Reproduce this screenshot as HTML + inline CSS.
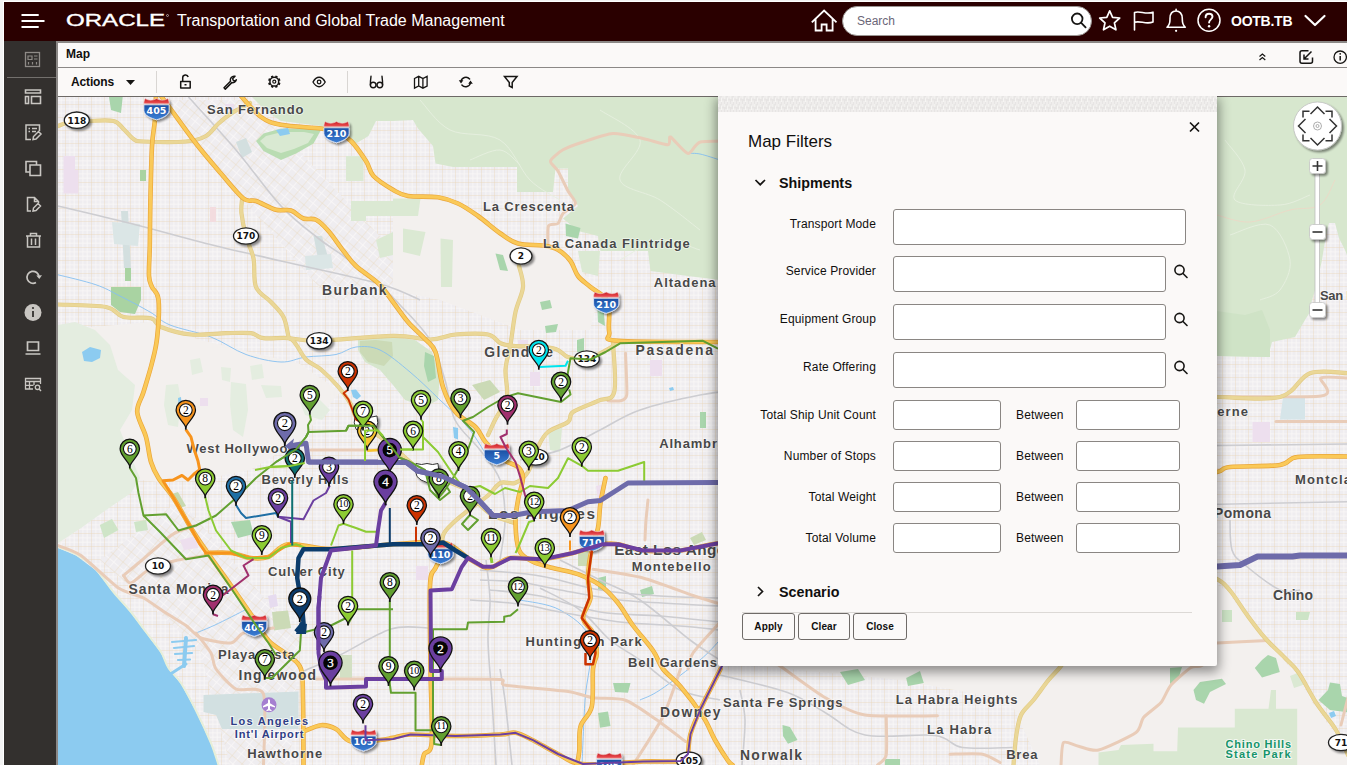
<!DOCTYPE html>
<html lang="en">
<head>
<meta charset="utf-8">
<title>Transportation and Global Trade Management</title>
<style>
*{box-sizing:border-box;margin:0;padding:0}
html,body{width:1348px;height:765px;overflow:hidden;background:#f3f3f3;font-family:"Liberation Sans",Arial,sans-serif;color:#100f0e}
#app{position:absolute;left:4px;top:2px;width:1343px;height:763px;overflow:hidden;background:#fbf9f8;outline:1px solid #fff}
#hdr{position:absolute;left:0;top:0;width:1343px;height:39px;background:#2a0000;color:#fff}
#hdr .title{position:absolute;left:173px;top:9px;font-size:16px;line-height:20px;white-space:nowrap;color:#fff}
#hdr .user{position:absolute;left:1227px;top:10px;font-size:14px;line-height:18px;font-weight:bold;letter-spacing:-0.25px}
#search{position:absolute;left:838px;top:4px;width:250px;height:30px;border-radius:15px;background:#fff;border:1px solid #9a9592}
#search span{position:absolute;left:14px;top:7px;font-size:12px;line-height:15px;color:#6b6677}
#side{position:absolute;left:0;top:39px;width:52px;height:724px;background:#33302e}
#side .sep{position:absolute;left:3px;top:36px;width:49px;height:1px;background:#73706d}
#side svg{position:absolute;left:0;top:0}
#main{position:absolute;left:52px;top:39px;width:1291px;height:724px;background:#fbf9f8;border-left:2px solid #8b8886}
#mhead{position:absolute;left:0;top:0;width:1289px;height:27px;border-top:2px solid #8b8886;border-bottom:1px solid #8b8886;background:#fbf9f8}
#mhead b{position:absolute;left:8px;top:4px;font-size:12px;line-height:15px}
#tbar{position:absolute;left:0;top:27px;width:1289px;height:29px;background:#fbf9f8;border-bottom:1px solid #6d6966}
#tbar .act{position:absolute;left:13px;top:7px;font-size:12px;line-height:15px;font-weight:bold;letter-spacing:-0.15px}
#tbar .vs{position:absolute;top:3px;width:1px;height:22px;background:#d9d6d3}
#map{position:absolute;left:0;top:56px;width:1289px;height:668px;background:#f1eeee;overflow:hidden}
#map svg{position:absolute;left:0;top:0}
#pwrap{position:absolute;left:54px;top:94px;width:1289px;height:669px;overflow:hidden}
#panel{position:absolute;left:660px;top:0;width:499px;height:570px;background:#fbf9f8;border-radius:0 0 2px 2px;box-shadow:0 4px 12px 2px rgba(0,0,0,.42)}
#panel .grip{position:absolute;left:0;top:0;width:499px;height:16px;background:#e7e5e4;overflow:hidden}
#panel h2{position:absolute;left:30px;top:36px;font-size:17px;line-height:20px;font-weight:normal}
#panel h3{position:absolute;font-size:14.3px;line-height:18px;font-weight:bold}
#panel label{position:absolute;font-size:12px;line-height:15px;text-align:right;white-space:nowrap;letter-spacing:.14px}
#panel .in{position:absolute;background:#fff;border:1px solid #8a8683;border-radius:3px}
#panel .hr{position:absolute;left:24px;top:516px;width:450px;height:1px;background:#dcd9d6}
#panel .btn{position:absolute;top:517px;height:27px;border:1px solid #6f6b68;border-radius:3px;font-size:10px;font-weight:bold;line-height:25px;letter-spacing:.1px;text-align:center;background:#fbf9f8}
</style>
</head>
<body>
<div id="app">
  <div id="hdr">
    <svg width="110" height="20" style="position:absolute;left:60px;top:9px"><text x="2" y="15.2" font-family="'Liberation Sans',Arial,sans-serif" font-size="16.6" fill="#fff" stroke="#fff" stroke-width=".35" textLength="99" lengthAdjust="spacingAndGlyphs">ORACLE</text><circle cx="103.500" cy="4.500" r="1" fill="none" stroke="#fff" stroke-width=".5"/></svg>
    <div class="title">Transportation and Global Trade Management</div>
    <div id="search"><span>Search</span></div>
    <div class="user">OOTB.TB</div>
    <svg id="hicons" width="1343" height="39" viewBox="4 2 1343 39" style="position:absolute;left:0;top:0" fill="none" stroke="#fff" stroke-width="2" stroke-linecap="round" stroke-linejoin="round">
      <path d="M21.5 15H38.7M21.5 21H44.5M21.5 27H38.7" stroke-width="2.2" stroke-linecap="butt"/>
<path d="M812.5 21.7L824.1 10.6L835.8 21.7M815.6 20V30.5H821.6V24.5H826.6V30.5H832.6V20" stroke-width="1.8" stroke-linecap="square" stroke-linejoin="miter"/>
<g stroke="#161513" stroke-width="1.8"><circle cx="1077.2" cy="18.8" r="5.3"/><path d="M1081.2 22.8L1085.6 27.4"/></g>
<path d="M1109.7 10.8L1112.6 17.3L1119.7 18L1114.4 22.8L1115.9 29.8L1109.7 26.2L1103.5 29.8L1105 22.8L1099.7 18L1106.8 17.3Z" stroke-width="1.7"/>
<path d="M1134.5 30V12.5C1140 10.5 1146 15 1153 12.2V22C1146 24.8 1140 20.3 1134.5 22.3" stroke-width="1.6"/>
<path d="M1167 27.3H1185.3C1182 24.5 1182.3 22 1182.3 18.5C1182.3 13.5 1179.5 11 1176.1 11C1172.7 11 1170 13.5 1170 18.5C1170 22 1170.3 24.5 1167 27.3ZM1176.1 11V9.3" stroke-width="1.6"/><circle cx="1176.1" cy="30.8" r="1.1" fill="#fff" stroke="none"/>
<circle cx="1209" cy="20.3" r="11" stroke-width="1.5"/>
<path d="M1205.6 17.3C1205.6 15 1207.2 13.8 1209.1 13.8C1211 13.8 1212.5 15 1212.5 16.8C1212.5 19.3 1209.1 19.5 1209.1 22.6" stroke-width="1.9"/><circle cx="1209.1" cy="26.3" r="1.2" fill="#fff" stroke="none"/>
<path d="M1305.5 16L1315 25L1324.5 16" stroke-width="2.2"/>
    </svg>
  </div>
  <div id="side">
    <div class="sep"></div>
    <svg id="sicons" width="52" height="724" viewBox="4 41 52 724" fill="none" stroke="#c9c6c2" stroke-width="1.6">
      <g stroke="#8f8b87" stroke-width="1.3"><rect x="25.5" y="52.5" width="14" height="14"/><path d="M28 56H32V59.5H28ZM34 56H37.5M34 59H37.5M28.5 62V64.5M32.5 62V64.5M36.5 62V64.5" stroke-width="1.2"/></g>
<path d="M25.5 90H40.5V93H25.5ZM25.5 96.5H28.5V103.5H25.5ZM31.5 96.5H40.5V103.5H31.5Z"/>
<path d="M39.5 131V125H26V139.5H31M28.5 128.5H30M32 128.5H37M28.5 131.5H30M32 131.5H36M33 139.5L33.5 136.5L38.5 131.5L41 134L36 139L33 139.5Z" stroke-width="1.5"/>
<path d="M36.5 164.5V161.5H26V172H29.5M30 165H40.5V175.5H30Z"/>
<path d="M31 211H27.5V197.5H34.5L38.5 201.5V203M34.5 197.5V201.5H38.5M33 211L33.5 208L38 203.5L40.5 206L36 210.5Z" stroke-width="1.5"/>
<path d="M26 236H41M30.5 236V233.5H36.5V236M27.5 236V247H39.5V236M31.5 238.5V245M35.5 238.5V245" stroke-width="1.5"/>
<path d="M39 277A6 6 0 1 0 36 282.5" stroke-width="1.7"/><path d="M36.3 275.5L39.3 279L42 275.2Z" fill="#c9c6c2" stroke="none"/>
<circle cx="33" cy="312.5" r="8.5" fill="#c9c6c2" stroke="none"/><path d="M33 311V317" stroke="#33302e" stroke-width="1.8"/><circle cx="33" cy="308" r="1.1" fill="#33302e" stroke="none"/>
<path d="M27.5 342H38.5V350.5H27.5ZM25.5 354H40.5" stroke-width="1.7"/>
<path d="M25.5 378.5H40.5V381.5H25.5ZM25.5 381.5V389H33M29.5 381.5V389M34 381.5V385M25.5 385.3H33.5M40.5 381.5V384" stroke-width="1.3"/><circle cx="37.5" cy="387.3" r="2.2" stroke-width="1.3"/><path d="M39.2 389L41 391" stroke-width="1.4"/>
    </svg>
  </div>
  <div id="main">
    <div id="mhead"><b>Map</b>
      <svg width="1289" height="24" viewBox="58 43 1289 24" style="position:absolute;left:0;top:0" fill="none" stroke="#161513" stroke-width="1.5">
        <path d="M1259.5 56.5L1262.4 54L1265.3 56.5M1259.5 60L1262.4 57.5L1265.3 60" stroke-width="1.2"/>
<path d="M1308.5 50.7H1302A2 2 0 0 0 1300 52.7V61.3A2 2 0 0 0 1302 63.3H1310.5A2 2 0 0 0 1312.5 61.3V57.5M1311.5 51.5L1304 59M1304 54.5V59H1308.5" stroke-width="1.5"/>
<circle cx="1340.2" cy="57.2" r="6.2" stroke-width="1.3"/><path d="M1340.2 56V60.5" stroke-width="1.5"/><circle cx="1340.2" cy="53.8" r=".9" fill="#161513" stroke="none"/>
      </svg>
    </div>
    <div id="tbar">
      <span class="act">Actions</span>
      <span class="vs" style="left:98px"></span>
      <span class="vs" style="left:289px"></span>
      <svg id="ticons" width="1289" height="28" viewBox="58 68 1289 28" style="position:absolute;left:0;top:0" fill="none" stroke="#161513" stroke-width="1.5" stroke-linecap="round" stroke-linejoin="round">
        <path d="M126 80H135L130.5 85Z" fill="#161513" stroke="none"/>
<path d="M180.7 81.5H190.2V88H180.7ZM182.7 81.5V77.8A2.8 2.8 0 0 1 188.2 77M184.5 84.8H186.5" stroke-width="1.5" stroke-linecap="butt"/>
<path d="M224 87.8L230.5 81.3A3.8 3.8 0 0 1 235 76.3L232.6 78.7L233.4 80.5L235.3 80.9L236.3 79.8A3.8 3.8 0 0 1 231.8 82.6L225.3 89.1Z" stroke-width="1.5"/>
<circle cx="274.3" cy="81.7" r="4.4" stroke-width="1.5"/><circle cx="274.3" cy="81.7" r="1.5" stroke-width="1.2"/><path d="M278.5 83.5L280.1 84.1M276.1 85.9L276.7 87.5M272.5 85.9L271.9 87.5M270.1 83.5L268.5 84.1M270.1 79.9L268.5 79.3M272.5 77.5L271.9 75.9M276.1 77.5L276.7 75.9M278.5 79.9L280.1 79.3" stroke-width="2.3" stroke-linecap="butt"/>
<path d="M313 82C315 78.5 317 77.3 319.1 77.3C321.2 77.3 323.2 78.5 325.2 82C323.2 85.5 321.2 86.7 319.1 86.7C317 86.7 315 85.5 313 82Z" stroke-width="1.4"/><circle cx="319.1" cy="82" r="1.8" stroke-width="1.3"/>
<path d="M371 76.3C370.6 79 370.4 82 370.4 85M382 76.3C382.4 79 382.6 82 382.6 85" stroke-width="1.4"/><circle cx="373.2" cy="85" r="2.8" stroke-width="1.4"/><circle cx="379.8" cy="85" r="2.8" stroke-width="1.4"/>
<path d="M414.5 78.5L418.7 76.3L422.9 78.5L427.1 76.3V86L422.9 88.2L418.7 86L414.5 88.2ZM418.7 76.3V86M422.9 78.5V88.2" stroke-width="1.3" stroke-linejoin="miter"/>
<path d="M461 81.5A4.9 4.9 0 0 1 469.6 79M470.5 82.5A4.9 4.9 0 0 1 461.9 85" stroke-width="1.5"/><path d="M458.8 80.2H463.4L461 83.4ZM468.2 83.8H472.8L470.5 80.6Z" fill="#161513" stroke="none"/>
<path d="M504.5 76.5H517L512.2 82.5V87.5L509.3 86V82.5Z" stroke-width="1.5" stroke-linejoin="miter"/>
      </svg>
    </div>
    <div id="map">
<svg id="mapsvg" width="1290" height="668" viewBox="58 97 1290 668">
<defs>
<pattern id="grid" width="13" height="13" patternUnits="userSpaceOnUse"><path d="M0 4.800H13M0 9.100H13M4.800 0V13M9.100 0V13" stroke="#f8f6f6" stroke-width=".9" fill="none"/><path d="M0 .5H13M.5 0V13" stroke="#e9d6b6" stroke-width=".7" fill="none" opacity=".55"/></pattern>
<pattern id="gridr" width="13" height="13" patternUnits="userSpaceOnUse" patternTransform="rotate(40)"><path d="M0 6.500H13M6.500 0V13" stroke="#f8f6f6" stroke-width=".9" fill="none"/><path d="M0 .5H13M.5 0V13" stroke="#e9d6b6" stroke-width=".7" fill="none" opacity=".5"/></pattern>
<linearGradient id="shblue" x1="0" y1="0" x2="0" y2="1"><stop offset="0" stop-color="#1b4fa3"/><stop offset="1" stop-color="#3a7fd6"/></linearGradient>
<linearGradient id="shred" x1="0" y1="0" x2="0" y2="1"><stop offset="0" stop-color="#c81e22"/><stop offset="1" stop-color="#f0555a"/></linearGradient>
<filter id="ds" x="-30%" y="-30%" width="160%" height="170%"><feGaussianBlur in="SourceAlpha" stdDeviation="1.2"/><feOffset dx="1.5" dy="2"/><feComponentTransfer><feFuncA type="linear" slope=".45"/></feComponentTransfer><feMerge><feMergeNode/><feMergeNode in="SourceGraphic"/></feMerge></filter>
<g id="pin"><path d="M0 17.2C-2.4 11-9.7 6.800-9.700 0A9.700 9.700 0 1 1 9.700 0C9.700 6.800 2.400 11 0 17.200Z" stroke="#111" stroke-width="1.250"/><path d="M0 16.500V19.600" stroke="#111" stroke-width="1.700"/></g>
<g id="pinL"><path d="M0 20.400C-2.800 13-11 8-11 0A11 11 0 1 1 11 0C11 8 2.800 13 0 20.400Z" stroke="#111" stroke-width="1.300"/><path d="M0 19.500V23" stroke="#111" stroke-width="1.800"/></g>
<g id="pinX"><path d="M0 21.200C-3 13.500-11.600 8.400-11.600 0A11.600 11.600 0 1 1 11.600 0C11.600 8.400 3 13.500 0 21.200Z" stroke="#111" stroke-width="1.300"/><path d="M0 20.300V23.500" stroke="#111" stroke-width="1.800"/></g>
</defs>
<rect x="58" y="96" width="1290" height="669" fill="#efedf0"/>
<rect x="58" y="96" width="1290" height="669" fill="url(#grid)"/>
<path d="M170 100L250 100L393 250L393 300L330 300L200 150Z" fill="#efedf0"/><path d="M170 100L250 100L393 250L393 300L330 300L200 150Z" fill="url(#gridr)"/>
<path d="M100 560L180 500L300 640L290 765L230 765L200 650Z" fill="#efedf0"/><path d="M100 560L180 500L300 640L290 765L230 765L200 650Z" fill="url(#gridr)"/>
<path d="M58 330L150 322L200 340L300 364L340 392L300 440L250 470L200 480L160 482L140 480L58 545Z" fill="#f3f0ee"/>
<path d="M393 190L460 205L520 245L560 250L600 290L590 330L520 330L440 300L393 290Z" fill="#f3f0ee"/>
<path d="M720 666L1216 666L1216 584L1228 592L1245 616L1263 638L1283 659L1296 675L1312 702L1332 730L1348 758L1348 765L1040 765L1010 700L900 680L760 666Z" fill="#f3f0ee"/>
<path d="M121 211L128 211L131 268L124 268Z" fill="#d3dfdf"/>
<path d="M112 222L140 224L138 246L114 244Z" fill="#dbe6e6"/>
<path d="M313.5 236L322 236L331 268L320 268.5Z" fill="#d3dfdf"/>
<path d="M305 256L331 254L333 268L306 270Z" fill="#dbe6e6"/>
<path d="M236 142L246 138L252 152L242 158Z" fill="#d3dfdf"/>
<path d="M203.5 695L298.5 691.5L298.5 729L222 729L216 715L203.5 712Z" fill="#d2e0e1"/>
<path d="M63.5 156L75 156L75 170L78.5 170L78.5 193.5L63.5 193.5Z" fill="#eddfee"/>
<path d="M1252.5 422L1270 422L1270 442L1252.5 442Z" fill="#eddfee"/>
<path d="M1283 397L1305 397L1305 419.5L1280 419.5Z" fill="#d6e5e9"/>
<path d="M225 104L234 104L234 114L225 114Z" fill="#eddfee"/>
<path d="M180 540L196 536L198 548L184 550Z" fill="#eddfee"/>
<path d="M268 596L276 594L278 606L270 608Z" fill="#e6dbef"/>
<path d="M518 340L528 340L528 352L518 352Z" fill="#eddfee"/>
<path d="M530 372L540 372L540 386L530 386Z" fill="#eddfee"/>
<path d="M650 360L662 360L662 376L650 376Z" fill="#eddfee"/>
<path d="M596 486L604 484L606 500L598 500Z" fill="#eddfee"/>
<path d="M416 566L428 566L428 580L416 580Z" fill="#eddfee"/>
<path d="M200 398L208 398L208 406L200 406Z" fill="#eddfee"/>
<path d="M210 207L216 207L216 222L210 222Z" fill="#f3dcdf"/>
<path d="M251 96L266 111L281 121L321 126L346 136L356 143.5L368.5 136L376 121L393 121L413 120L418 128.5L433 146L435.5 163.5L453 167L517 167L517 192L553 192L555.5 168.5L568 168.5L568 188.5L578 206L563 218.5L578 231L598 236L600.5 251L648 251L650.5 271L688 276L720 280L1217 356L1268 357L1272 342L1295 337L1305 320L1310 312L1312 300L1316 287L1322 260L1326 235L1329 223L1335 223L1339 238L1345 250L1348 258L1348 96Z" fill="#d7e7ce"/>
<path d="M1217 311L1245 315L1262 310L1270 330L1270 357L1217 356Z" fill="#cfe3c6"/>
<path d="M58 325L75 322L95 330L110 345L118 370L135 385L132 410L120 430L128 450L140 478L131 493L106 510L81 528L58 543Z" fill="#e4ede0"/>
<path d="M166 385L178 384L181 400L178 427L168 425L164 405Z" fill="#e4ede0"/>
<path d="M231 382L246 384L248 410L243 437L233 430L230 405Z" fill="#e4ede0"/>
<path d="M261 385L281 386L282 397L266 398Z" fill="#e4ede0"/>
<path d="M221 367L231 368L230 382L222 380Z" fill="#e4ede0"/>
<path d="M250 366L262 364L264 378L252 380Z" fill="#e4ede0"/>
<path d="M190 360L200 358L203 372L192 375Z" fill="#e4ede0"/>
<path d="M300 402L318 398L330 410L322 420L305 415Z" fill="#e4ede0"/>
<path d="M358 340L372 338L393 337L415 340L432 352L440 375L438 400L425 407L405 400L393 385L380 370L365 362L358 350Z" fill="#d6e6cd"/>
<path d="M360 341L376 340L392 342L393 356L384 366L368 362L360 352Z" fill="#cbdab6"/>
<path d="M425 352L434 356L436 378L428 382L424 366Z" fill="#a9d5ac"/>
<path d="M256 141L263.5 133.5L281 128.5L306 128.5L321 130L313.5 143.5L296 153.5L281 160L263.5 151Z" fill="#b9dcb2"/>
<path d="M260 141L266 136L282 132L304 132L314 134L308 143L294 149L281 153L267 148Z" fill="#d9e9d2"/>
<path d="M111 287L141 287L141 300L135 314L120 312L111 305Z" fill="#a9d3a2"/>
<path d="M109 97L122.7 97L121 113L111 110Z" fill="#a9d5ac"/>
<path d="M140 170L146 170L146 181L140 181Z" fill="#a9d3a2"/>
<path d="M125 268L131 268L131 281L125 281Z" fill="#a9d3a2"/>
<path d="M346 156L363.5 156L363.5 181L346 181Z" fill="#dbe9d3"/>
<path d="M351 201L366 201L366 221L351 221Z" fill="#dbe9d3"/>
<path d="M366 201L393 201L393 216L366 216Z" fill="#dbe9d3"/>
<path d="M376 240L393 232L393 255L380 258Z" fill="#dbe9d3"/>
<path d="M393 198.5L420.5 198.5L418 216L393 216Z" fill="#dbe9d3"/>
<path d="M403 228.5L425.5 232L420 256L403 252Z" fill="#dbe9d3"/>
<path d="M440.5 238.5L453 240L452 287L441 287Z" fill="#dbe9d3"/>
<path d="M495.5 253.5L503 255L508 271L500 270Z" fill="#a9d5ac"/>
<path d="M565.5 223.5L580.5 228L578 238.5L566 236Z" fill="#a9d5ac"/>
<path d="M578 251L600 251L598 276L582 272Z" fill="#dbe9d3"/>
<path d="M597 300L603 302L605 326L598 322Z" fill="#a9d5ac"/>
<path d="M540 302L550 300L552 308L542 310Z" fill="#a9d5ac"/>
<path d="M545 326L558 324L556 332L546 333Z" fill="#a9d5ac"/>
<path d="M577 340L584 338L584 352L577 352Z" fill="#a9d5ac"/>
<path d="M472 385L490 380L500 392L484 400Z" fill="#cbdab6"/>
<path d="M548 430L562 428L560 452L550 450Z" fill="#dbe9d3"/>
<path d="M700 412L706 412L706 428L700 428Z" fill="#a9d5ac"/>
<path d="M231 522L250 520L253.5 534L238 538Z" fill="#a9d5ac"/>
<path d="M99.8 525L112 519L118.5 530L104 538Z" fill="#cfe5c8"/>
<path d="M134 522L146 520L148 530L136 532Z" fill="#cfe5c8"/>
<path d="M272 612L288 610.5L291 628L274 630.5Z" fill="#cbdab6"/>
<path d="M172 494L178 492L186 506L180 508Z" fill="#c7d9b0"/>
<path d="M340 655L352 655L352 678L340 678Z" fill="#d3e0c4"/>
<path d="M613 683L630.5 683L628 692.8L615 692Z" fill="#a9d5ac"/>
<path d="M598 713L608 711.5L610.5 726L600 727.8Z" fill="#a9d5ac"/>
<path d="M840 672L858 669L865 680L848 685Z" fill="#a9d5ac"/>
<path d="M906.2 678L920 671L923.8 683L908 686Z" fill="#a9d5ac"/>
<path d="M782.5 725L790 727L797.5 740L788 743.8L783 736Z" fill="#a9d5ac"/>
<path d="M885 759L900 759L900 765L885 765Z" fill="#a9d5ac"/>
<path d="M598 578L606 576L606 590L598 590Z" fill="#a9d5ac"/>
<path d="M640 590L652 586L654 594L642 597Z" fill="#a9d5ac"/>
<path d="M578 550L588 550L588 566L578 566Z" fill="#cbdab6"/>
<path d="M690 538L702 532L706 540L694 545Z" fill="#cbdab6"/>
<path d="M1234.8 708.8L1268.5 708.8L1271 690L1276 690L1276 708.8L1297.2 708.8L1297.2 765L1098.5 765L1098.5 752.5L1118.5 750L1121 745L1153.5 743.8L1153.5 751.2L1177.2 751.2L1178 727.5L1234.8 727.5Z" fill="#d9e8d1"/>
<path d="M1193.5 690L1200 682L1222 678.8L1226 684L1210 692L1204 703.8L1196 700Z" fill="#a9d5ac"/>
<path d="M1254.8 668L1262 660L1268 655L1276 658L1279.8 672L1262 677.5Z" fill="#a9d5ac"/>
<path d="M1318.5 700L1328 690L1330 682.5L1340 684L1342 696L1348 698L1348 712.5L1330 710Z" fill="#a9d5ac"/>
<path d="M1170 668L1182 667L1178 680L1170 684Z" fill="#a9d5ac"/>
<path d="M1290 676L1300 672L1306 684L1294 688Z" fill="#dbe9d3"/>
<path d="M1222 610L1232 610L1232 622L1222 622Z" fill="#cde4c6"/>
<path d="M1296 612L1310 612L1308 620L1296 620Z" fill="#cde4c6"/>
<g fill="none" stroke="#e6efe0" stroke-width=".9">
<path d="M420 100C425 105 436.7 123.3 450 130C463.3 136.7 486.7 131.7 500 140C513.3 148.3 520 170 530 180C540 190 555 196.7 560 200"/>
<path d="M600 110C606.7 115 636.7 128.3 640 140C643.3 151.7 616.7 170 620 180C623.3 190 646.7 191.7 660 200C673.3 208.3 693.3 225 700 230"/>
<path d="M1225 140C1228.3 145 1243.3 160 1245 170C1246.7 180 1229.2 194.2 1235 200C1240.8 205.8 1267.5 205.8 1280 205C1292.5 204.2 1305 196.7 1310 195"/>
<path d="M1230 235C1236.7 233.3 1260 220.8 1270 225C1280 229.2 1288.3 249.2 1290 260C1291.7 270.8 1285 283.3 1280 290C1275 296.7 1263.3 298.3 1260 300"/>
<path d="M470 160C475 158.3 491.7 149.2 500 150C508.3 150.8 516.7 162.5 520 165"/>
<path d="M620 260C626.7 256.7 646.7 241.7 660 240C673.3 238.3 693.3 248.3 700 250"/>
</g>
<path d="M1217 215C1222.5 216.2 1237.8 222.8 1250 222C1262.2 221.2 1278.3 212.8 1290 210C1301.7 207.2 1312.5 210 1320 205C1327.5 200 1332.5 184.2 1335 180" fill="none" stroke="#ecd8c6" stroke-width=".9"/>
<path d="M58 548L76 555.5L96 570.5L113.5 593L131 613L146 633L161 653L168.5 669L181 684L196 711.5L211 744L218.5 765L58 765Z" fill="#8ccbf0"/>
<path d="M82 352L90 347L101 350L100 358L92 362L84 361Z" fill="#8ccbf0"/>
<path d="M351 390L356 389.5L361 396L357 399.5L353 397Z" fill="#8ccbf0"/>
<path d="M453 427L458 428L458 439.5L454 438Z" fill="#8ccbf0"/>
<path d="M178 398L181 397L182 410L179 412Z" fill="#8ccbf0"/>
<path d="M276 130L288 128L290 134L280 136Z" fill="#8ccbf0"/>
<path d="M669 388L673 387L674 390L670 391Z" fill="#8ccbf0"/>
<path d="M1329 713L1334 711L1336 716L1331 718Z" fill="#8ccbf0"/>
<path d="M58 547C61 548.2 69.7 550.8 76 554.5C82.3 558.2 89.8 563.2 96 569.5C102.2 575.8 107.7 584.9 113.5 592C119.3 599.1 125.6 605.3 131 612C136.4 618.7 141 625.3 146 632C151 638.7 157.2 646 161 652C164.8 658 165.2 662.8 168.5 668C171.8 673.2 176.4 675.9 181 683C185.6 690.1 191 700.5 196 710.5C201 720.5 207.2 733.9 211 743C214.8 752.1 217.2 761.3 218.5 765" fill="none" stroke="#e7efd9" stroke-width="2"/>
<g stroke="#8ccbf0" stroke-width="2.2" fill="none" stroke-linecap="round"><path d="M172 642L196 640M174 648L194 646M175 654L192 653M178 660L190 659.5"/><path d="M186 638L184 666" stroke-width="4"/><path d="M186 664L158 682" stroke-width="3"/></g>
<g fill="none" stroke="#86bff0" stroke-width=".9">
<path d="M58 274.8C64.3 276.4 85.7 281.2 96 284.8C106.3 288.3 111 291.5 120 296C129 300.5 141.7 307.2 150 312C158.3 316.8 159.8 320.8 170 325C180.2 329.2 198.3 332.1 211 337C223.7 341.9 234.3 350.3 246 354.5C257.7 358.7 271 361.6 281 362C291 362.4 296.8 358.2 306 357C315.2 355.8 327.7 356.2 336 354.5C344.3 352.8 348.7 347.8 356 347C363.3 346.2 371 345.8 380 350C389 354.2 400 363.7 410 372C420 380.3 430 390.3 440 400C450 409.7 460.8 418.3 470 430C479.2 441.7 490.8 463.3 495 470"/>
<path d="M520 600C526.7 601.7 548.3 603.3 560 610C571.7 616.7 585.8 625 590 640C594.2 655 586.3 679.2 585 700C583.7 720.8 582.5 754.2 582 765"/>
<path d="M688 153.5C690 153.6 694.7 152.9 700 154C705.3 155.1 716.7 159 720 160"/>
<path d="M196 633C199.2 631.7 206.8 628.8 215 625C223.2 621.2 240 612.5 245 610"/>
<path d="M640 700C643.3 698.3 650 696.7 660 690C670 683.3 690 668.3 700 660C710 651.7 716.7 643.3 720 640"/>
</g>
<g fill="none" stroke="#cdcdd1" stroke-width="1.6">
<path d="M304 671C310 668.3 325.5 662 340 655C354.5 648 376.3 633.5 391 629C405.7 624.5 421.8 628.2 428 628"/>
<path d="M470 600C478.3 600.7 505 602 520 604C535 606 543.3 609 560 612C576.7 615 600 619.7 620 622C640 624.3 663.3 624.7 680 626C696.7 627.3 713.3 629.3 720 630"/>
<path d="M480 570C490 571 520 572.7 540 576C560 579.3 580 586.7 600 590C620 593.3 640 594.7 660 596C680 597.3 710 597.7 720 598"/>
<path d="M560 560C566.7 563.3 586.7 573.3 600 580C613.3 586.7 625 590 640 600C655 610 676.7 630 690 640C703.3 650 715 656.7 720 660"/>
<path d="M58 206C70.2 208.9 106.3 217.2 131 223.5C155.7 229.8 181 237.2 206 243.5C231 249.8 252.2 254.3 281 261C309.8 267.7 355.3 277 378.5 283.5C401.7 290 413.1 297.2 420 300"/>
<path d="M188.5 97C196.4 105.8 220.6 131.8 236 150C251.4 168.2 267.2 191.2 281 206C294.8 220.8 308.1 230.2 318.5 238.5C328.9 246.8 333.5 248.5 343.5 256C353.5 263.5 369.1 275.3 378.5 283.5C387.9 291.7 391.4 295.6 400 305C408.6 314.4 422.5 327.5 430 340C437.5 352.5 440.8 366.7 445 380C449.2 393.3 449.2 408.3 455 420C460.8 431.7 472.5 440 480 450C487.5 460 495.8 468.3 500 480C504.2 491.7 505 506.7 505 520C505 533.3 500.8 553.3 500 560"/>
<path d="M1180 446L1348 444"/>
<path d="M1180 505L1348 501.8"/>
<path d="M720 675C731.2 677.9 770 686.2 787.5 692.5C805 698.8 812.1 705.4 825 712.5C837.9 719.6 846.7 731.2 865 735C883.3 738.8 918.8 733.4 935 735.5C951.2 737.6 949.6 745.5 962.5 747.5C975.4 749.5 1004.2 747.5 1012.5 747.5"/>
<path d="M480 580C486.7 580.3 506.7 580.3 520 582C533.3 583.7 543.3 587 560 590C576.7 593 600 597.7 620 600C640 602.3 663.3 603 680 604C696.7 605 713.3 605.7 720 606"/>
<path d="M490 590C498.3 591 521.7 592.3 540 596C558.3 599.7 580 608.7 600 612C620 615.3 640 614.3 660 616C680 617.7 710 621 720 622"/>
<path d="M540 588C546.7 591.7 568.3 601.3 580 610C591.7 618.7 600 631.7 610 640C620 648.3 628.3 651.7 640 660C651.7 668.3 666.7 683.3 680 690C693.3 696.7 713.3 698.3 720 700"/>
<path d="M500 669C500.8 674.2 503 684 505 700C507 716 510.8 754.2 512 765"/>
<path d="M486 560C486.7 566.7 489.7 586.7 490 600C490.3 613.3 487.7 623.3 488 640C488.3 656.7 490.7 679.2 492 700C493.3 720.8 495.3 754.2 496 765"/>
<path d="M1230 520C1230.3 525 1229.5 542.5 1232 550C1234.5 557.5 1237 558.3 1245 565C1253 571.7 1270.8 585.8 1280 590C1289.2 594.2 1296.7 590 1300 590"/>
<path d="M520 460C526.7 458.3 546.7 455 560 450C573.3 445 586.7 436.7 600 430C613.3 423.3 623.3 415.8 640 410C656.7 404.2 683.3 398.3 700 395C716.7 391.7 733.3 390.8 740 390"/>
<path d="M740 690C740.8 695 744.7 707.5 745 720C745.3 732.5 742.5 757.5 742 765"/>
</g>
<g fill="none" stroke="#e9ccb8" stroke-width="3" stroke-linejoin="round" stroke-linecap="round">
<path d="M548 246C548.1 243.7 547.3 228.6 548.5 226C549.7 223.4 556.3 225 558 223.5C559.7 222 561 215.8 563 213.5C565 211.2 574.9 206.1 575.5 203.5C576.1 200.9 570 194.8 568 191C566 187.2 560 174.5 558 171C556 167.5 549.9 163.5 550.5 161C551.1 158.5 559.2 152 563 149.8C566.8 147.5 577.2 143.9 583 142C588.8 140.1 606 133.9 613 133.5C620 133.1 636.6 137.2 643 138.5C649.4 139.8 664.8 144.9 668 144.8C671.2 144.6 668.2 136 670.5 137C672.8 138 684.5 152.9 688 153.5C691.5 154.1 694.4 143.5 700.5 142C706.6 140.5 735.4 141.1 740 141"/>
<path d="M58 545.5C60.7 546.7 73.9 550.5 81 555.5C88.1 560.5 111.2 583 118.5 588C125.8 593 138 595.1 143.5 598C149 600.9 161 609.8 166 613C171 616.2 181.9 622.6 186 625.5C190.1 628.4 195.8 636 201 638C206.2 640 226 643.6 231 643C236 642.4 238.5 634.8 243.5 633C248.5 631.2 270 628.6 273.5 628"/>
<path d="M123.5 575.5C125.2 574 133 567.7 138.5 563C144 558.3 166 539.3 171 535.5C176 531.7 178.1 531.7 181 530.5C183.9 529.3 194.2 526.1 196 525.5"/>
<path d="M123.5 575.5C124.4 576.4 127.8 583.9 131 583C134.2 582.1 145.8 570.6 151 568C156.2 565.4 169.6 562 176 560.5C182.4 559 202.5 556.1 206 555.5"/>
<path d="M196 633C197.8 635.3 208.7 648.8 211 653C213.3 657.2 213.1 664.8 216 669C218.9 673.2 230.5 686.1 236 689C241.5 691.9 260.3 685.1 263.5 694C266.7 702.9 263.5 756.7 263.5 765"/>
<path d="M316 679C325 679 378.2 679 393 679C407.8 679 430.5 678.9 443 679C455.5 679.1 493.2 678.8 500.5 679.5C507.8 680.2 497.6 683.9 505.5 685.2C513.4 686.6 557.8 690 568 691.5C578.2 693 586.3 696.7 593 697.8C599.7 698.8 618.2 697.8 625.5 700.2C632.8 702.7 648.5 714.2 655.5 719C662.5 723.8 682 738.9 685.5 741.5"/>
<path d="M680.5 669C678.5 674.5 668.5 705.3 663 716.5C657.5 727.7 636.5 759.3 633 765"/>
<path d="M593 569.2C598.8 570.3 631.3 574.9 643 578C654.7 581.1 684.4 592.6 693 595.5C701.6 598.4 709.2 600.7 717 603C724.8 605.3 755 613.6 760 615"/>
<path d="M740 600C737.3 603 722.5 619.3 717 625.5C711.5 631.7 696.4 647.9 693 653C689.6 658.1 688.6 667.1 688 669"/>
<path d="M625.5 353.2C625.6 358.1 627.3 389 626.8 394.5C626.2 400 622.7 400 620.5 400.8C618.3 401.5 609.5 400.8 608 400.8"/>
<path d="M311 450L378.5 450"/>
<path d="M740 640C744.7 643 770.1 659.3 780 666C789.9 672.7 815.1 691.8 825 697.5C834.9 703.2 851.9 712.9 865 715C878.1 717.1 929 715.7 937.5 715.8"/>
<path d="M886.2 715.8C886.2 720.3 887.3 749.3 886.2 755C885.2 760.7 878.5 763.8 877.5 765"/>
<path d="M950 754.2C953.8 754.2 976.7 753.3 982.5 754.2C988.3 755.2 998 761.5 1000 762.5"/>
<path d="M1215 655C1213.4 656.3 1203.8 664.5 1201 666C1198.2 667.5 1194.5 665.3 1191 667.5C1187.5 669.7 1174.5 680.9 1171 685C1167.5 689.1 1164.2 698.7 1161 702.5C1157.8 706.3 1146.4 714 1143.5 717.5C1140.6 721 1141.2 728.7 1136 732.5C1130.8 736.3 1105.2 748.4 1098.5 750C1091.8 751.6 1082.6 747.1 1078.5 746.2C1074.4 745.4 1065.5 740.3 1063.5 742.5C1061.5 744.7 1061.3 762.4 1061 765"/>
<path d="M1180 396C1196.5 396 1304.5 398.1 1321 396C1337.5 393.9 1317.8 380.1 1321 378C1324.2 375.9 1344.8 378 1348 378"/>
<path d="M1276 421.5L1348 421.5"/>
<path d="M1180 645C1184.3 644.8 1206.8 643.5 1217 643C1227.2 642.5 1261.6 640.8 1267.5 640.5"/>
<path d="M1348 697.5L1341 725"/>
<path d="M645 540C645.1 537.7 645.6 524.7 646 520C646.4 515.3 647.8 502.3 648 500"/>
</g>
<g fill="none" stroke-linejoin="round" stroke-linecap="round">
<path d="M58 126C60 125.3 64.9 122.8 70 122C75.1 121.2 81.2 121.2 88.5 121C95.8 120.8 107.7 119.7 113.5 121C119.3 122.3 120.2 126 123.5 129C126.8 132 130.2 136.9 133.5 139C136.8 141.1 134.8 141.1 143.5 141.5C152.2 141.9 175.6 142.4 186 141.5C196.4 140.6 200.6 139 206 136C211.4 133 214.3 127.2 218.5 123.5C222.7 119.8 227.2 116.1 231 113.5C234.8 110.9 237.8 109.8 241 108C244.2 106.2 248.5 103.8 250 103" stroke="#e2ca84" stroke-width="4.2"/>
<path d="M242 199.8C241.9 202 240.8 207.5 241.5 213.5C242.2 219.5 244 228.5 246 236C248 243.5 251.8 250 253.5 258.5C255.2 267 253.1 279.8 256 287C258.9 294.2 266.4 297 271 302C275.6 307 280.6 311.2 283.5 317C286.4 322.8 287.7 333.7 288.5 337" stroke="#e2ca84" stroke-width="4.2"/>
<path d="M58 304.5C66 304.9 95.1 304.9 106 307C116.9 309.1 116 315.1 123.5 317C131 318.9 144.8 316.6 151 318.2C157.2 319.9 154.3 324.3 161 327C167.7 329.7 180.2 333.5 191 334.5C201.8 335.5 216 333.5 226 333.2C236 333 244.8 332.4 251 333.2C257.2 334.1 257.2 337.4 263.5 338.2C269.8 339.1 283.1 337.2 288.5 338.2C293.9 339.3 293.1 341 296 344.5C298.9 348 301.8 355.3 306 359.5C310.2 363.7 315.6 364.9 321 369.5C326.4 374.1 333.5 381.2 338.5 387C343.5 392.8 348.1 399.5 351 404.5C353.9 409.5 352.7 412.8 356 417C359.3 421.2 364.8 425 371 430C377.2 435 384.8 440.3 393 447C401.2 453.7 412.5 464.8 420 470C427.5 475.2 430 474.6 438 478C446 481.4 461.3 486.3 468 490.5C474.7 494.7 473.8 498.8 478 503C482.2 507.2 486.8 512.2 493 515.5C499.2 518.8 511.3 521.8 515 523" stroke="#e2ca84" stroke-width="4.2"/>
<path d="M288.5 338C293.6 338.5 301.6 341.1 319 340.8C336.4 340.4 374.4 336 393 335.8C411.6 335.5 420.1 339.7 430.5 339.5C440.9 339.3 445.9 335.3 455.5 334.5C465.1 333.7 480.5 333 488 334.5C495.5 336 496.3 341.4 500.5 343.2C504.7 345.1 504.2 344.9 513 345.8C521.8 346.6 543.8 346.4 553 348.2C562.2 350.1 562.4 355.2 568 357C573.6 358.8 580.9 359.8 586.8 359C592.6 358.2 597.8 354.6 603 352C608.2 349.4 615.5 344.7 618 343.2" stroke="#e2ca84" stroke-width="4.2"/>
<path d="M519 266C519.7 269.5 523.6 279.3 523 287C522.4 294.7 517.6 302.4 515.5 312C513.4 321.6 512.2 334.9 510.5 344.5C508.8 354.1 506.1 360.8 505.5 369.5C504.9 378.2 508.5 388.6 506.8 397C505 405.4 498.1 413.7 495 420C491.9 426.3 489.2 432.5 488 435" stroke="#e2ca84" stroke-width="4.2"/>
<path d="M613 342C613.2 350.3 616.8 382.2 614.2 392C611.8 401.8 604.9 397.4 598 400.8C591.1 404.1 578 408.5 573 412C568 415.5 572.2 418.7 568 422C563.8 425.3 553 427.8 548 432C543 436.2 541.3 440.3 538 447C534.7 453.7 531.8 466 528 472C524.2 478 519.6 481.2 515 483C510.4 484.8 505 480.9 500.5 483C496 485.1 493.4 490.9 488 495.5C482.6 500.1 473.8 505.9 468 510.5C462.2 515.1 457.2 518.8 453 523C448.8 527.2 444.7 530.1 443 535.5C441.3 540.9 443 552.2 443 555.5" stroke="#e2ca84" stroke-width="4.2"/>
<path d="M1180 560C1186.2 563.2 1208.7 573.9 1217 579C1225.3 584.1 1224.9 584.4 1230 590.5C1235.1 596.6 1241.7 607.6 1247.5 615.5C1253.3 623.4 1258.8 630.9 1265 638C1271.2 645.1 1279.4 652.2 1285 658C1290.6 663.8 1293.3 665.1 1298.5 672.5C1303.7 679.9 1309.8 692.9 1316 702.5C1322.2 712.1 1330.7 721.2 1336 730C1341.3 738.8 1346 750.8 1348 755" stroke="#e2ca84" stroke-width="4.2"/>
<path d="M1070 650C1068.5 652.7 1064.6 661 1061 666C1057.4 671 1053.1 674.3 1048.5 680C1043.9 685.7 1038.1 694.2 1033.5 700C1028.9 705.8 1023.9 708.8 1021 715C1018.1 721.2 1017.2 729.2 1016 737.5C1014.8 745.8 1013.9 760.4 1013.5 765" stroke="#e2ca84" stroke-width="4.2"/>
<path d="M1180 397C1186.2 397 1200.3 397 1217 397C1233.7 397 1264.5 401 1280 397C1295.5 393 1298.7 377.2 1310 373.2C1321.3 369.3 1341.7 373.2 1348 373.2" stroke="#e2ca84" stroke-width="4.2"/>
<path d="M58 126C60 125.3 64.9 122.8 70 122C75.1 121.2 81.2 121.2 88.5 121C95.8 120.8 107.7 119.7 113.5 121C119.3 122.3 120.2 126 123.5 129C126.8 132 130.2 136.9 133.5 139C136.8 141.1 134.8 141.1 143.5 141.5C152.2 141.9 175.6 142.4 186 141.5C196.4 140.6 200.6 139 206 136C211.4 133 214.3 127.2 218.5 123.5C222.7 119.8 227.2 116.1 231 113.5C234.8 110.9 237.8 109.8 241 108C244.2 106.2 248.5 103.8 250 103" stroke="#ead797" stroke-width="3"/>
<path d="M242 199.8C241.9 202 240.8 207.5 241.5 213.5C242.2 219.5 244 228.5 246 236C248 243.5 251.8 250 253.5 258.5C255.2 267 253.1 279.8 256 287C258.9 294.2 266.4 297 271 302C275.6 307 280.6 311.2 283.5 317C286.4 322.8 287.7 333.7 288.5 337" stroke="#ead797" stroke-width="3"/>
<path d="M58 304.5C66 304.9 95.1 304.9 106 307C116.9 309.1 116 315.1 123.5 317C131 318.9 144.8 316.6 151 318.2C157.2 319.9 154.3 324.3 161 327C167.7 329.7 180.2 333.5 191 334.5C201.8 335.5 216 333.5 226 333.2C236 333 244.8 332.4 251 333.2C257.2 334.1 257.2 337.4 263.5 338.2C269.8 339.1 283.1 337.2 288.5 338.2C293.9 339.3 293.1 341 296 344.5C298.9 348 301.8 355.3 306 359.5C310.2 363.7 315.6 364.9 321 369.5C326.4 374.1 333.5 381.2 338.5 387C343.5 392.8 348.1 399.5 351 404.5C353.9 409.5 352.7 412.8 356 417C359.3 421.2 364.8 425 371 430C377.2 435 384.8 440.3 393 447C401.2 453.7 412.5 464.8 420 470C427.5 475.2 430 474.6 438 478C446 481.4 461.3 486.3 468 490.5C474.7 494.7 473.8 498.8 478 503C482.2 507.2 486.8 512.2 493 515.5C499.2 518.8 511.3 521.8 515 523" stroke="#ead797" stroke-width="3"/>
<path d="M288.5 338C293.6 338.5 301.6 341.1 319 340.8C336.4 340.4 374.4 336 393 335.8C411.6 335.5 420.1 339.7 430.5 339.5C440.9 339.3 445.9 335.3 455.5 334.5C465.1 333.7 480.5 333 488 334.5C495.5 336 496.3 341.4 500.5 343.2C504.7 345.1 504.2 344.9 513 345.8C521.8 346.6 543.8 346.4 553 348.2C562.2 350.1 562.4 355.2 568 357C573.6 358.8 580.9 359.8 586.8 359C592.6 358.2 597.8 354.6 603 352C608.2 349.4 615.5 344.7 618 343.2" stroke="#ead797" stroke-width="3"/>
<path d="M519 266C519.7 269.5 523.6 279.3 523 287C522.4 294.7 517.6 302.4 515.5 312C513.4 321.6 512.2 334.9 510.5 344.5C508.8 354.1 506.1 360.8 505.5 369.5C504.9 378.2 508.5 388.6 506.8 397C505 405.4 498.1 413.7 495 420C491.9 426.3 489.2 432.5 488 435" stroke="#ead797" stroke-width="3"/>
<path d="M613 342C613.2 350.3 616.8 382.2 614.2 392C611.8 401.8 604.9 397.4 598 400.8C591.1 404.1 578 408.5 573 412C568 415.5 572.2 418.7 568 422C563.8 425.3 553 427.8 548 432C543 436.2 541.3 440.3 538 447C534.7 453.7 531.8 466 528 472C524.2 478 519.6 481.2 515 483C510.4 484.8 505 480.9 500.5 483C496 485.1 493.4 490.9 488 495.5C482.6 500.1 473.8 505.9 468 510.5C462.2 515.1 457.2 518.8 453 523C448.8 527.2 444.7 530.1 443 535.5C441.3 540.9 443 552.2 443 555.5" stroke="#ead797" stroke-width="3"/>
<path d="M1180 560C1186.2 563.2 1208.7 573.9 1217 579C1225.3 584.1 1224.9 584.4 1230 590.5C1235.1 596.6 1241.7 607.6 1247.5 615.5C1253.3 623.4 1258.8 630.9 1265 638C1271.2 645.1 1279.4 652.2 1285 658C1290.6 663.8 1293.3 665.1 1298.5 672.5C1303.7 679.9 1309.8 692.9 1316 702.5C1322.2 712.1 1330.7 721.2 1336 730C1341.3 738.8 1346 750.8 1348 755" stroke="#ead797" stroke-width="3"/>
<path d="M1070 650C1068.5 652.7 1064.6 661 1061 666C1057.4 671 1053.1 674.3 1048.5 680C1043.9 685.7 1038.1 694.2 1033.5 700C1028.9 705.8 1023.9 708.8 1021 715C1018.1 721.2 1017.2 729.2 1016 737.5C1014.8 745.8 1013.9 760.4 1013.5 765" stroke="#ead797" stroke-width="3"/>
<path d="M1180 397C1186.2 397 1200.3 397 1217 397C1233.7 397 1264.5 401 1280 397C1295.5 393 1298.7 377.2 1310 373.2C1321.3 369.3 1341.7 373.2 1348 373.2" stroke="#ead797" stroke-width="3"/>
<path d="M156 96C155.8 100.2 155.4 112.7 154.8 121C154.1 129.3 152.7 133.5 152 146C151.3 158.5 150.9 179.3 150.5 196C150.1 212.7 150 232.7 149.8 246C149.5 259.3 148.6 269.2 149 276C149.4 282.8 150.4 283.1 152 287C153.6 290.9 157.6 291.2 158.5 299.5C159.4 307.8 158.3 326.6 157.2 337C156.2 347.4 154.5 352.8 152.2 362C150 371.2 146 383.7 143.5 392C141 400.3 136.8 404.5 137.2 412C137.7 419.5 143.7 428.7 146 437C148.3 445.3 148.9 455.2 151 462C153.1 468.8 154.8 472 158.5 478C162.2 484 168.1 489.7 173.5 498C178.9 506.3 185.6 519.2 191 528C196.4 536.8 199.3 540.9 206 550.5C212.7 560.1 223.1 574.2 231 585.5C238.9 596.8 247.2 608.8 253.5 618C259.8 627.2 262.7 634.2 268.5 640.5C274.3 646.8 283.1 650.8 288.5 655.5C293.9 660.2 298.6 661.6 301 669C303.4 676.4 302.6 684 303 700C303.4 716 303.4 754.2 303.5 765" stroke="#eaa63a" stroke-width="4.6"/>
<path d="M161 96C162.2 97.7 162.7 98.1 168.5 106C174.3 113.9 187.2 132.2 196 143.5C204.8 154.8 213.1 164.3 221 173.5C228.9 182.7 237.7 193.9 243.5 198.5C249.3 203.1 250.6 199.1 256 201C261.4 202.9 270.2 208.2 276 209.8C281.8 211.3 286.4 209 291 210.5C295.6 212 299.3 217 303.5 218.5C307.7 220 311.8 217.7 316 219.8C320.2 221.8 323.9 225.8 328.5 231C333.1 236.2 338.9 245.2 343.5 251C348.1 256.8 350.2 260.6 356 266C361.8 271.4 372.3 277.5 378.5 283.5C384.7 289.5 388.1 295.6 393 302C397.9 308.4 402.6 315.8 408 322C413.4 328.2 420.9 334.5 425.5 339.5C430.1 344.5 432.6 344.1 435.5 352C438.4 359.9 439.7 377 443 387C446.3 397 450.1 405.3 455.5 412C460.9 418.7 470.5 422 475.5 427C480.5 432 480.9 436.6 485.5 442C490.1 447.4 497.6 455.3 503 459.5C508.4 463.7 514.7 463.9 518 467C521.3 470.1 523 472.5 523 478C523 483.5 519.2 492.5 518 500C516.8 507.5 515.3 514.6 515.5 523C515.7 531.4 516.3 544 519.2 550.5C522.2 557 527.4 558.8 533 561.8C538.6 564.7 545.5 565.9 553 568C560.5 570.1 570.1 571.3 578 574.2C585.9 577.2 593.8 580.7 600.5 585.5C607.2 590.3 612.6 596.3 618 603C623.4 609.7 627.2 617.6 633 625.5C638.8 633.4 648 643.2 653 650.5C658 657.8 658.4 663 663 669C667.6 675 673.8 678.6 680.5 686.5C687.2 694.4 697.2 707.6 703 716.5C708.8 725.4 710.9 732.8 715 740C719.1 747.2 724.6 755.8 727.5 760C730.4 764.2 731.7 764.2 732.5 765" stroke="#eaa63a" stroke-width="4.6"/>
<path d="M241 96C244.3 99.5 254.3 112.2 261 117C267.7 121.8 271 122.8 281 124.8C291 126.7 311.8 127.3 321 128.5C330.2 129.7 331 129.9 336 132C341 134.1 346 136.2 351 141C356 145.8 362.2 155.2 366 161C369.8 166.8 369 171.2 373.5 176C378 180.8 387.2 186.4 393 189.8C398.8 193.1 400.5 194.8 408 196C415.5 197.2 429.7 196 438 197.2C446.3 198.5 451.3 200.4 458 203.5C464.7 206.6 470.9 211 478 216C485.1 221 493.8 228.9 500.5 233.5C507.2 238.1 510.9 241.5 518 243.5C525.1 245.5 536.3 244.5 543 245.5C549.7 246.5 553.4 247.2 558 249.8C562.6 252.3 567.2 256.6 570.5 261C573.8 265.4 574.7 271.7 578 276C581.3 280.3 585.5 282.7 590.5 287C595.5 291.3 604.9 294.5 608 302C611.1 309.5 607.6 325.5 609.2 332C610.9 338.5 600 339.1 618 340.8C636 342.4 693.3 341.8 717 342C740.7 342.2 752.8 342 760 342" stroke="#eaa63a" stroke-width="4.6"/>
<path d="M605.5 478C604.7 482.2 601.8 494.7 600.5 503C599.2 511.3 599.5 520.5 598 528C596.5 535.5 593.4 539.7 591.8 548C590.1 556.3 588.2 569.7 588 578C587.8 586.3 591.3 591.3 590.5 598C589.7 604.7 582.6 612.2 583 618C583.4 623.8 590.7 627.2 593 633C595.3 638.8 596.8 647 596.8 653C596.8 659 593.8 660.1 593 669C592.2 677.9 593.8 696.9 591.8 706.5C589.7 716.1 582.6 719 580.5 726.5C578.4 734 579.9 745.1 579.2 751.5C578.6 757.9 577.2 762.8 576.8 765" stroke="#eaa63a" stroke-width="4.6"/>
<path d="M443 555.5C441.8 557.6 437.7 563 435.5 568C433.3 573 430.8 568.7 430 585.5C429.2 602.3 430.2 643 430.5 669C430.8 695 432.8 727.3 431.8 741.5C430.7 755.7 425.9 750.1 424.2 754C422.6 757.9 422.2 763.2 421.8 765" stroke="#eaa63a" stroke-width="4.6"/>
<path d="M303.5 731.5C306.4 730.5 315.6 725.7 321 725.2C326.4 724.8 331 726.3 336 729C341 731.7 343.7 739.7 351 741.5C358.3 743.3 373 740.6 380 740C387 739.4 387.9 738.7 393 737.8C398.1 736.8 400.1 734.8 410.5 734.5C420.9 734.2 440.5 736 455.5 736C470.5 736 490.5 735 500.5 734.5C510.5 734 510.1 731.8 515.5 732.8C520.9 733.7 525.9 736.7 533 740.2C540.1 743.8 549.7 750 558 754C566.3 758 568.8 762.8 583 764C597.2 765.2 626.8 762 643 761.5C659.2 761 673 762.2 680.5 761C688 759.8 686.8 755.2 688 754" stroke="#eaa63a" stroke-width="4.6"/>
<path d="M720.5 669C719.7 670.7 718.8 672.3 715.5 679C712.2 685.7 704.7 699.8 700.5 709C696.3 718.2 692.6 726.5 690.5 734C688.4 741.5 688.8 748.8 688 754C687.2 759.2 686.3 763.2 686 765" stroke="#eaa63a" stroke-width="4.6"/>
<path d="M206 553C210.2 553 223.5 552.2 231 553C238.5 553.8 244.8 557.4 251 558C257.2 558.6 262.2 559 268.5 556.8C274.8 554.5 278.1 545.5 288.5 544.2C298.9 543 313.6 549 331 549C348.4 549 374.3 545.3 393 544.2C411.7 543.2 430.5 540.2 443 542.5C455.5 544.8 461.3 554 468 558C474.7 562 478.8 565.3 483 566.8C487.2 568.2 488.4 568.2 493 566.8C497.6 565.3 502.2 559.2 510.5 558C518.8 556.8 532.6 560.1 543 559.2C553.4 558.4 563 555.5 573 553C583 550.5 595.5 545.7 603 544.2C610.5 542.8 611.3 543.2 618 544.2C624.7 545.3 632.6 549.5 643 550.5C653.4 551.5 668.2 551.7 680.5 550.5C692.8 549.3 703.8 545.2 717 543.5C730.2 541.8 752.8 540.6 760 540" stroke="#eaa63a" stroke-width="4.6"/>
<path d="M1180 478C1186.2 477 1208.7 473.8 1217 472C1225.3 470.2 1219.5 468.2 1230 467C1240.5 465.8 1268.8 466.7 1280 465C1291.2 463.3 1286.2 458.4 1297.5 457C1308.8 455.6 1339.6 456.6 1348 456.5" stroke="#eaa63a" stroke-width="4.6"/>
<path d="M156 96C155.8 100.2 155.4 112.7 154.8 121C154.1 129.3 152.7 133.5 152 146C151.3 158.5 150.9 179.3 150.5 196C150.1 212.7 150 232.7 149.8 246C149.5 259.3 148.6 269.2 149 276C149.4 282.8 150.4 283.1 152 287C153.6 290.9 157.6 291.2 158.5 299.5C159.4 307.8 158.3 326.6 157.2 337C156.2 347.4 154.5 352.8 152.2 362C150 371.2 146 383.7 143.5 392C141 400.3 136.8 404.5 137.2 412C137.7 419.5 143.7 428.7 146 437C148.3 445.3 148.9 455.2 151 462C153.1 468.8 154.8 472 158.5 478C162.2 484 168.1 489.7 173.5 498C178.9 506.3 185.6 519.2 191 528C196.4 536.8 199.3 540.9 206 550.5C212.7 560.1 223.1 574.2 231 585.5C238.9 596.8 247.2 608.8 253.5 618C259.8 627.2 262.7 634.2 268.5 640.5C274.3 646.8 283.1 650.8 288.5 655.5C293.9 660.2 298.6 661.6 301 669C303.4 676.4 302.6 684 303 700C303.4 716 303.4 754.2 303.5 765" stroke="#fac958" stroke-width="3.2"/>
<path d="M161 96C162.2 97.7 162.7 98.1 168.5 106C174.3 113.9 187.2 132.2 196 143.5C204.8 154.8 213.1 164.3 221 173.5C228.9 182.7 237.7 193.9 243.5 198.5C249.3 203.1 250.6 199.1 256 201C261.4 202.9 270.2 208.2 276 209.8C281.8 211.3 286.4 209 291 210.5C295.6 212 299.3 217 303.5 218.5C307.7 220 311.8 217.7 316 219.8C320.2 221.8 323.9 225.8 328.5 231C333.1 236.2 338.9 245.2 343.5 251C348.1 256.8 350.2 260.6 356 266C361.8 271.4 372.3 277.5 378.5 283.5C384.7 289.5 388.1 295.6 393 302C397.9 308.4 402.6 315.8 408 322C413.4 328.2 420.9 334.5 425.5 339.5C430.1 344.5 432.6 344.1 435.5 352C438.4 359.9 439.7 377 443 387C446.3 397 450.1 405.3 455.5 412C460.9 418.7 470.5 422 475.5 427C480.5 432 480.9 436.6 485.5 442C490.1 447.4 497.6 455.3 503 459.5C508.4 463.7 514.7 463.9 518 467C521.3 470.1 523 472.5 523 478C523 483.5 519.2 492.5 518 500C516.8 507.5 515.3 514.6 515.5 523C515.7 531.4 516.3 544 519.2 550.5C522.2 557 527.4 558.8 533 561.8C538.6 564.7 545.5 565.9 553 568C560.5 570.1 570.1 571.3 578 574.2C585.9 577.2 593.8 580.7 600.5 585.5C607.2 590.3 612.6 596.3 618 603C623.4 609.7 627.2 617.6 633 625.5C638.8 633.4 648 643.2 653 650.5C658 657.8 658.4 663 663 669C667.6 675 673.8 678.6 680.5 686.5C687.2 694.4 697.2 707.6 703 716.5C708.8 725.4 710.9 732.8 715 740C719.1 747.2 724.6 755.8 727.5 760C730.4 764.2 731.7 764.2 732.5 765" stroke="#fac958" stroke-width="3.2"/>
<path d="M241 96C244.3 99.5 254.3 112.2 261 117C267.7 121.8 271 122.8 281 124.8C291 126.7 311.8 127.3 321 128.5C330.2 129.7 331 129.9 336 132C341 134.1 346 136.2 351 141C356 145.8 362.2 155.2 366 161C369.8 166.8 369 171.2 373.5 176C378 180.8 387.2 186.4 393 189.8C398.8 193.1 400.5 194.8 408 196C415.5 197.2 429.7 196 438 197.2C446.3 198.5 451.3 200.4 458 203.5C464.7 206.6 470.9 211 478 216C485.1 221 493.8 228.9 500.5 233.5C507.2 238.1 510.9 241.5 518 243.5C525.1 245.5 536.3 244.5 543 245.5C549.7 246.5 553.4 247.2 558 249.8C562.6 252.3 567.2 256.6 570.5 261C573.8 265.4 574.7 271.7 578 276C581.3 280.3 585.5 282.7 590.5 287C595.5 291.3 604.9 294.5 608 302C611.1 309.5 607.6 325.5 609.2 332C610.9 338.5 600 339.1 618 340.8C636 342.4 693.3 341.8 717 342C740.7 342.2 752.8 342 760 342" stroke="#fac958" stroke-width="3.2"/>
<path d="M605.5 478C604.7 482.2 601.8 494.7 600.5 503C599.2 511.3 599.5 520.5 598 528C596.5 535.5 593.4 539.7 591.8 548C590.1 556.3 588.2 569.7 588 578C587.8 586.3 591.3 591.3 590.5 598C589.7 604.7 582.6 612.2 583 618C583.4 623.8 590.7 627.2 593 633C595.3 638.8 596.8 647 596.8 653C596.8 659 593.8 660.1 593 669C592.2 677.9 593.8 696.9 591.8 706.5C589.7 716.1 582.6 719 580.5 726.5C578.4 734 579.9 745.1 579.2 751.5C578.6 757.9 577.2 762.8 576.8 765" stroke="#fac958" stroke-width="3.2"/>
<path d="M443 555.5C441.8 557.6 437.7 563 435.5 568C433.3 573 430.8 568.7 430 585.5C429.2 602.3 430.2 643 430.5 669C430.8 695 432.8 727.3 431.8 741.5C430.7 755.7 425.9 750.1 424.2 754C422.6 757.9 422.2 763.2 421.8 765" stroke="#fac958" stroke-width="3.2"/>
<path d="M303.5 731.5C306.4 730.5 315.6 725.7 321 725.2C326.4 724.8 331 726.3 336 729C341 731.7 343.7 739.7 351 741.5C358.3 743.3 373 740.6 380 740C387 739.4 387.9 738.7 393 737.8C398.1 736.8 400.1 734.8 410.5 734.5C420.9 734.2 440.5 736 455.5 736C470.5 736 490.5 735 500.5 734.5C510.5 734 510.1 731.8 515.5 732.8C520.9 733.7 525.9 736.7 533 740.2C540.1 743.8 549.7 750 558 754C566.3 758 568.8 762.8 583 764C597.2 765.2 626.8 762 643 761.5C659.2 761 673 762.2 680.5 761C688 759.8 686.8 755.2 688 754" stroke="#fac958" stroke-width="3.2"/>
<path d="M720.5 669C719.7 670.7 718.8 672.3 715.5 679C712.2 685.7 704.7 699.8 700.5 709C696.3 718.2 692.6 726.5 690.5 734C688.4 741.5 688.8 748.8 688 754C687.2 759.2 686.3 763.2 686 765" stroke="#fac958" stroke-width="3.2"/>
<path d="M206 553C210.2 553 223.5 552.2 231 553C238.5 553.8 244.8 557.4 251 558C257.2 558.6 262.2 559 268.5 556.8C274.8 554.5 278.1 545.5 288.5 544.2C298.9 543 313.6 549 331 549C348.4 549 374.3 545.3 393 544.2C411.7 543.2 430.5 540.2 443 542.5C455.5 544.8 461.3 554 468 558C474.7 562 478.8 565.3 483 566.8C487.2 568.2 488.4 568.2 493 566.8C497.6 565.3 502.2 559.2 510.5 558C518.8 556.8 532.6 560.1 543 559.2C553.4 558.4 563 555.5 573 553C583 550.5 595.5 545.7 603 544.2C610.5 542.8 611.3 543.2 618 544.2C624.7 545.3 632.6 549.5 643 550.5C653.4 551.5 668.2 551.7 680.5 550.5C692.8 549.3 703.8 545.2 717 543.5C730.2 541.8 752.8 540.6 760 540" stroke="#fac958" stroke-width="3.2"/>
<path d="M1180 478C1186.2 477 1208.7 473.8 1217 472C1225.3 470.2 1219.5 468.2 1230 467C1240.5 465.8 1268.8 466.7 1280 465C1291.2 463.3 1286.2 458.4 1297.5 457C1308.8 455.6 1339.6 456.6 1348 456.5" stroke="#fac958" stroke-width="3.2"/>
</g>
<g font-family="'Liberation Sans',Arial,sans-serif" font-weight="bold" fill="#484848" stroke="#fff" stroke-width="1.600" stroke-opacity=".6" paint-order="stroke" stroke-linejoin="round">
<text x="207" y="114" font-size="13" textLength="96.5" lengthAdjust="spacing">San Fernando</text>
<text x="322" y="295" font-size="13.9" textLength="64.5" lengthAdjust="spacing">Burbank</text>
<text x="483" y="210.5" font-size="13" textLength="91" lengthAdjust="spacing">La Crescenta</text>
<text x="543" y="247.8" font-size="13" textLength="146.8" lengthAdjust="spacing">La Canada Flintridge</text>
<text x="653.8" y="287" font-size="13" textLength="61.8" lengthAdjust="spacing">Altadena</text>
<text x="484.2" y="357" font-size="13.9" textLength="68.8" lengthAdjust="spacing">Glendale</text>
<text x="635.5" y="355" font-size="13.9" textLength="77.5" lengthAdjust="spacing">Pasadena</text>
<text x="659.2" y="448.2" font-size="13" textLength="65.8" lengthAdjust="spacing">Alhambra</text>
<text x="186.5" y="453" font-size="13" textLength="109.5" lengthAdjust="spacing">West Hollywood</text>
<text x="261.5" y="483.5" font-size="13" textLength="87" lengthAdjust="spacing">Beverly Hills</text>
<text x="268" y="575.5" font-size="13" textLength="76.8" lengthAdjust="spacing">Culver City</text>
<text x="128.5" y="594.2" font-size="13.9" textLength="100" lengthAdjust="spacing">Santa Monica</text>
<text x="218" y="658.5" font-size="13" textLength="76.8" lengthAdjust="spacing">Playa Vista</text>
<text x="238.5" y="680.2" font-size="13.9" textLength="77.5" lengthAdjust="spacing">Inglewood</text>
<text x="247.2" y="757.8" font-size="13" textLength="75" lengthAdjust="spacing">Hawthorne</text>
<text x="488" y="519.2" font-size="15.4" textLength="107" lengthAdjust="spacing">Los Angeles</text>
<text x="614.2" y="555" font-size="15.4" textLength="133.8" lengthAdjust="spacing">East Los Angeles</text>
<text x="631.8" y="570.5" font-size="13" textLength="78.8" lengthAdjust="spacing">Montebello</text>
<text x="525.5" y="645.5" font-size="13" textLength="116.2" lengthAdjust="spacing">Huntington Park</text>
<text x="628" y="666.8" font-size="13" textLength="89" lengthAdjust="spacing">Bell Gardens</text>
<text x="660" y="717" font-size="13.9" textLength="60.5" lengthAdjust="spacing">Downey</text>
<text x="723" y="707" font-size="13" textLength="119.5" lengthAdjust="spacing">Santa Fe Springs</text>
<text x="895.8" y="703.8" font-size="13" textLength="121.8" lengthAdjust="spacing">La Habra Heights</text>
<text x="927" y="733.8" font-size="13" textLength="64.2" lengthAdjust="spacing">La Habra</text>
<text x="740" y="760" font-size="13.9" textLength="62" lengthAdjust="spacing">Norwalk</text>
<text x="1006.2" y="758.8" font-size="13" textLength="31.2" lengthAdjust="spacing">Brea</text>
<text x="1320" y="300" font-size="13" textLength="64" lengthAdjust="spacing">San Dimas</text>
<text x="1186" y="415.8" font-size="13" textLength="62" lengthAdjust="spacing">La Verne</text>
<text x="1214" y="518" font-size="13.9" textLength="57" lengthAdjust="spacing">Pomona</text>
<text x="1295" y="483.5" font-size="13" textLength="67" lengthAdjust="spacing">Montclair</text>
<text x="1273" y="600" font-size="13.9" textLength="40" lengthAdjust="spacing">Chino</text>
</g>
<g font-family="'Liberation Sans',Arial,sans-serif" font-weight="bold" font-size="11" stroke="#fff" stroke-width="2" stroke-opacity=".7" paint-order="stroke">
<text x="230.5" y="725.25" textLength="77.5" fill="#2f3d86">Los Angeles</text><text x="234.75" y="737.75" textLength="68.75" fill="#2f3d86">Int'l Airport</text>
<text x="1225.5" y="747.5" textLength="65.5" fill="#16946a">Chino Hills</text><text x="1225.5" y="758.25" textLength="65" fill="#16946a">State Park</text>
</g>
<circle cx="269" cy="704.75" r="7.5" fill="#a57fd0"/><path d="M269 699.2c.8 0 1 1 1 2v2l5 3v1.3l-5-1.5v3l1.6 1.2v1l-2.6-.7-2.6.7v-1l1.6-1.2v-3l-5 1.5V706l5-3v-2c0-1 .2-2 1-2z" fill="#fff"/>
<g font-family="'DejaVu Sans','Liberation Sans',sans-serif" font-weight="bold" font-size="9" text-anchor="middle">
<ellipse cx="76.8" cy="120.2" rx="12.5" ry="8.2" fill="#fff" stroke="#222" stroke-width="1.3" filter="url(#ds)"/><text x="76.8" y="123.5" fill="#111">118</text>
<ellipse cx="246" cy="236" rx="12.5" ry="8.2" fill="#fff" stroke="#222" stroke-width="1.3" filter="url(#ds)"/><text x="246" y="239.3" fill="#111">170</text>
<ellipse cx="521" cy="256" rx="11" ry="8.2" fill="#fff" stroke="#222" stroke-width="1.3" filter="url(#ds)"/><text x="521" y="259.3" fill="#111">2</text>
<ellipse cx="319.2" cy="340.8" rx="12.5" ry="8.2" fill="#fff" stroke="#222" stroke-width="1.3" filter="url(#ds)"/><text x="319.2" y="344.1" fill="#111">134</text>
<ellipse cx="586.8" cy="359" rx="12.5" ry="8.2" fill="#fff" stroke="#222" stroke-width="1.3" filter="url(#ds)"/><text x="586.8" y="362.3" fill="#111">134</text>
<ellipse cx="158" cy="566" rx="12.5" ry="8.2" fill="#fff" stroke="#222" stroke-width="1.3" filter="url(#ds)"/><text x="158" y="569.3" fill="#111">10</text>
<ellipse cx="535.5" cy="457" rx="12.5" ry="8.2" fill="#fff" stroke="#222" stroke-width="1.3" filter="url(#ds)"/><text x="535.5" y="460.3" fill="#111">110</text>
<ellipse cx="688.8" cy="760.2" rx="12.5" ry="8.2" fill="#fff" stroke="#222" stroke-width="1.3" filter="url(#ds)"/><text x="688.8" y="763.5" fill="#111">105</text>
<ellipse cx="1341" cy="742.5" rx="12.5" ry="8.2" fill="#fff" stroke="#222" stroke-width="1.3" filter="url(#ds)"/><text x="1341" y="745.8" fill="#111">71</text>
</g>
<g font-family="'DejaVu Sans','Liberation Sans',sans-serif" font-weight="bold" font-size="9.5" text-anchor="middle" fill="#fff">
<g transform="translate(156.5 109)"><g filter="url(#ds)"><path d="M-12.600-4.200V1.500C-12.600 6.500-5 9.300 0 10.800C5 9.300 12.600 6.500 12.600 1.500V-4.200Z" fill="url(#shblue)" stroke="#e8eefa" stroke-width=".8"/><path d="M-12.6-5.2C-12.8-7.500-12-9-11.2-10.400C-8-8.300-4-8.300 0-10.400C4-8.300 8-8.300 11.200-10.400C12-9 12.800-7.500 12.600-5.200Z" fill="url(#shred)" stroke="#f3d6d6" stroke-width=".6"/></g><text x="0" y="5">405</text></g>
<g transform="translate(336.5 132)"><g filter="url(#ds)"><path d="M-12.600-4.200V1.500C-12.600 6.500-5 9.300 0 10.800C5 9.300 12.600 6.500 12.600 1.500V-4.200Z" fill="url(#shblue)" stroke="#e8eefa" stroke-width=".8"/><path d="M-12.6-5.2C-12.8-7.500-12-9-11.2-10.400C-8-8.300-4-8.300 0-10.400C4-8.300 8-8.300 11.200-10.400C12-9 12.800-7.500 12.600-5.200Z" fill="url(#shred)" stroke="#f3d6d6" stroke-width=".6"/></g><text x="0" y="5">210</text></g>
<g transform="translate(606.2 302.5)"><g filter="url(#ds)"><path d="M-12.600-4.200V1.500C-12.600 6.500-5 9.300 0 10.800C5 9.300 12.600 6.500 12.600 1.500V-4.200Z" fill="url(#shblue)" stroke="#e8eefa" stroke-width=".8"/><path d="M-12.6-5.2C-12.8-7.500-12-9-11.2-10.400C-8-8.300-4-8.300 0-10.400C4-8.300 8-8.300 11.200-10.400C12-9 12.800-7.500 12.600-5.200Z" fill="url(#shred)" stroke="#f3d6d6" stroke-width=".6"/></g><text x="0" y="5">210</text></g>
<g transform="translate(496.8 454)"><g filter="url(#ds)"><path d="M-12.600-4.200V1.500C-12.600 6.500-5 9.300 0 10.800C5 9.300 12.600 6.500 12.600 1.500V-4.200Z" fill="url(#shblue)" stroke="#e8eefa" stroke-width=".8"/><path d="M-12.6-5.2C-12.8-7.500-12-9-11.2-10.400C-8-8.300-4-8.300 0-10.400C4-8.300 8-8.300 11.200-10.400C12-9 12.800-7.500 12.600-5.200Z" fill="url(#shred)" stroke="#f3d6d6" stroke-width=".6"/></g><text x="0" y="5">5</text></g>
<g transform="translate(254.2 625.5)"><g filter="url(#ds)"><path d="M-12.600-4.200V1.500C-12.600 6.500-5 9.300 0 10.800C5 9.300 12.600 6.500 12.600 1.500V-4.200Z" fill="url(#shblue)" stroke="#e8eefa" stroke-width=".8"/><path d="M-12.6-5.2C-12.8-7.500-12-9-11.2-10.400C-8-8.300-4-8.300 0-10.400C4-8.300 8-8.300 11.200-10.400C12-9 12.800-7.500 12.600-5.200Z" fill="url(#shred)" stroke="#f3d6d6" stroke-width=".6"/></g><text x="0" y="5">405</text></g>
<g transform="translate(440.5 553)"><g filter="url(#ds)"><path d="M-12.600-4.200V1.500C-12.600 6.500-5 9.300 0 10.800C5 9.300 12.600 6.500 12.600 1.500V-4.200Z" fill="url(#shblue)" stroke="#e8eefa" stroke-width=".8"/><path d="M-12.6-5.2C-12.8-7.500-12-9-11.2-10.400C-8-8.300-4-8.300 0-10.400C4-8.300 8-8.300 11.200-10.400C12-9 12.800-7.500 12.600-5.200Z" fill="url(#shred)" stroke="#f3d6d6" stroke-width=".6"/></g><text x="0" y="5">110</text></g>
<g transform="translate(591.8 540.5)"><g filter="url(#ds)"><path d="M-12.600-4.200V1.500C-12.600 6.500-5 9.300 0 10.800C5 9.300 12.600 6.500 12.600 1.500V-4.200Z" fill="url(#shblue)" stroke="#e8eefa" stroke-width=".8"/><path d="M-12.6-5.2C-12.8-7.500-12-9-11.2-10.400C-8-8.300-4-8.300 0-10.400C4-8.300 8-8.300 11.200-10.400C12-9 12.800-7.500 12.600-5.200Z" fill="url(#shred)" stroke="#f3d6d6" stroke-width=".6"/></g><text x="0" y="5">710</text></g>
<g transform="translate(363.5 740.2)"><g filter="url(#ds)"><path d="M-12.600-4.200V1.500C-12.600 6.500-5 9.300 0 10.800C5 9.300 12.600 6.500 12.600 1.500V-4.200Z" fill="url(#shblue)" stroke="#e8eefa" stroke-width=".8"/><path d="M-12.6-5.2C-12.8-7.500-12-9-11.2-10.400C-8-8.300-4-8.300 0-10.400C4-8.300 8-8.300 11.200-10.400C12-9 12.800-7.500 12.600-5.200Z" fill="url(#shred)" stroke="#f3d6d6" stroke-width=".6"/></g><text x="0" y="5">105</text></g>
<g transform="translate(609.2 763.5)"><g filter="url(#ds)"><path d="M-12.600-4.200V1.500C-12.600 6.500-5 9.300 0 10.800C5 9.300 12.600 6.500 12.600 1.500V-4.200Z" fill="url(#shblue)" stroke="#e8eefa" stroke-width=".8"/><path d="M-12.6-5.2C-12.8-7.500-12-9-11.2-10.400C-8-8.300-4-8.300 0-10.400C4-8.300 8-8.300 11.200-10.400C12-9 12.800-7.500 12.600-5.200Z" fill="url(#shred)" stroke="#f3d6d6" stroke-width=".6"/></g><text x="0" y="5">105</text></g>
</g>
<path transform="translate(366 425)" d="M-11-9Q-5.500-7 0-9Q5.500-7 11-9Q13-2 10 4Q7 8 0 10Q-7 8-10 4Q-13-2-11-9Z" fill="#fff" stroke="#333" stroke-width="1" filter="url(#ds)"/>
<path transform="translate(427 472.5)" d="M-11-9Q-5.500-7 0-9Q5.500-7 11-9Q13-2 10 4Q7 8 0 10Q-7 8-10 4Q-13-2-11-9Z" fill="#fff" stroke="#333" stroke-width="1" filter="url(#ds)"/>
<g fill="none" stroke-linejoin="round" stroke-linecap="butt">
<path d="M365.5 725.2L365.5 740.2L393 739L410.5 734.5L455.5 736L500.5 734.5L515.5 732.8L533 740.2L558 754L583 764L643 761.5L680.5 761L688 754L690.5 734L700.5 709L715.5 679L720.5 669L730 650" stroke="#6b3fa0" stroke-width="2"/>
<path d="M185.8 429.5L191 437L194 449L198 461L199.7 469.6L194 474L188 480L182 475.4L173 480L163 480.7L173.5 498L179 507.7L191 528L199.7 544L206 553L231 553L251 558L268.5 556.8L288.5 544.2L301 545.5" stroke="#f7941d" stroke-width="3"/>
<path d="M309.8 414.5L311 420L308 425L308.5 432L346 430.8L348.5 425.8L373.5 425.8L381 434.5L393.4 449.4L399.7 457.8L410 462L425 470L432 484L438.8 497.5L445 490L453 478L458 469.5L468 449.5L474.2 432L463 420.8L473 417L488 407L505.5 397L518 393.2L561 402L570.5 394.5L569.2 389.5" stroke="#62a030" stroke-width="2"/>
<path d="M308.5 432L306 437L296 449.5L276 462L256 478L236 498L216 515.5L196 525.5L178.5 530.5L166 514.2L143.5 515.5L138.5 493L136 478L129.8 468" stroke="#62a030" stroke-width="2"/>
<path d="M143.5 515.5L161 533L186 559.2L208.5 555.5L231 588L256 625.5L268.5 643L276 655" stroke="#62a030" stroke-width="2"/>
<path d="M264.8 678L272 678L299.8 650.5L301 633L331 625.5L348 617L348 624.2L356 609.2L393 609.2" stroke="#62a030" stroke-width="2"/>
<path d="M389.8 600.5L389.8 684L391 692.8L415.5 692.8L415.5 730.2L433 730.2L433 629.2L466.8 629.2L468 622.5L504.2 621.8L504.2 616.8L510.5 615.5L518 609.2" stroke="#62a030" stroke-width="2"/>
<path d="M434.2 730L434.2 744L441 745" stroke="#62a030" stroke-width="2"/>
<path d="M760 350L717 348.2L703 340.8L620.5 343.2L605.5 352L590.5 359.5L570.5 358.2L568 372L566 384" stroke="#62a030" stroke-width="2"/>
<path d="M470 515L478 520L468 530L462 524L470 515" stroke="#62a030" stroke-width="2"/>
<path d="M425 470L430 490L440 500L450 492L445 484" stroke="#62a030" stroke-width="2"/>
<path d="M304.5 463L290 466L270 467L255 470" stroke="#8ccb33" stroke-width="2"/>
<path d="M205.2 496.8L208.5 510.5L216 530.5L231 550.5L246 558L268.5 558L281 548L296 544.2L306 548" stroke="#8ccb33" stroke-width="2"/>
<path d="M331 545.5L338.5 525.5L343.5 523.8L356 528L366 531.8L378.5 531.8" stroke="#8ccb33" stroke-width="2"/>
<path d="M352.2 550.5L352.2 598" stroke="#8ccb33" stroke-width="2"/>
<path d="M400 449.4L413 449.5L423 449.5L423 422L421 419.5" stroke="#8ccb33" stroke-width="2"/>
<path d="M423 437L438 452L453 474.5L462 486" stroke="#8ccb33" stroke-width="2"/>
<path d="M644.2 483L644.2 462L618 470.8L588 470.8L581.8 465.8L568 458.2L558 478L548 488L530 486L520 492L505 488L495 494L480 486L470 488" stroke="#8ccb33" stroke-width="2"/>
<path d="M534.2 520.5L529 522L518 548L515.5 553" stroke="#8ccb33" stroke-width="2"/>
<path d="M491 557.5L492 563" stroke="#8ccb33" stroke-width="3"/>
<path d="M347.8 390L343.5 393.2L348.5 399.5L356 419.5L371 427" stroke="#cc3300" stroke-width="2"/>
<path d="M416 526.8L416 541.8" stroke="#cc3300" stroke-width="2"/>
<path d="M591.8 550.5L588 578L589.2 598L581.8 618L593 633L595.5 653L593 664.2L585.5 664.2L585.5 653" stroke="#cc3300" stroke-width="2.5"/>
<path d="M570 540.5L570 550.5" stroke="#f7941d" stroke-width="2"/>
<path d="M539.2 367L565.5 365.8L568 360.8" stroke="#00e5ee" stroke-width="2"/>
<path d="M506.8 429.5L506.8 434L500.5 437L505.5 447L515.5 462L520.5 478L525 495L530 510L534 520" stroke="#a0306e" stroke-width="2"/>
<path d="M213 614.2L218 616" stroke="#a0306e" stroke-width="2"/>
<path d="M219 598L226 593L248.5 575.5L243.5 565.5L253.5 559.2" stroke="#a0306e" stroke-width="2"/>
<path d="M236 505L241 513L246 518L276 513L278 516.8" stroke="#1f6fa5" stroke-width="2"/>
<path d="M278 516.8L303.5 519.2L313.5 500.5L326 493L329.8 485.5" stroke="#6b3fa0" stroke-width="2"/>
<path d="M278 516.8L291 521.8L291 543" stroke="#6b3fa0" stroke-width="2"/>
<path d="M292.2 480.5L292.2 545.5" stroke="#0e7070" stroke-width="2"/>
<path d="M389.8 508L389.8 543" stroke="#0c3c6c" stroke-width="2"/>
<path d="M367.2 450.8L378 450" stroke="#f7c430" stroke-width="2.5"/>
<path d="M296 631.8L303.5 623L302.2 608L297.2 578L298.5 558L303.5 549.2L331 549.2L393 544.2L430.5 544.2L443 542.5L455.5 550.5L468 558" stroke="#0c3c6c" stroke-width="4.5"/>
<path d="M385.5 503L381 510.5L378 530L376 545.5L331 550.5L321 578L318.5 608L318.5 653L321 669L326 680L326 687.8L366 686.5L366 679L441.8 679L441.8 671L431 671L430.5 590.5L451.8 589.2L461.8 566.8L468 558L483 566.8L493 566.8L510.5 558L543 559.2L573 553L603 544.2L618 544.2L643 550.5L680.5 550.5L717 543.5L760 540" stroke="#6b3fa0" stroke-width="4"/>
<path d="M290 446L306 443.2L308.5 462L406.5 462.5L417.5 471L442.5 476.5L466 487.5L480 501.5L493 515.5L513 515.5L533 511.8L568 510.5L588 501.8L600.5 500.5L628 483L717 482.5L760 482.5" stroke="#6e6baa" stroke-width="5"/>
<path d="M1180 568L1217 566.5L1240 565L1257.5 556.5L1292.5 556.5L1300 555.5L1348 555.5" stroke="#6e6baa" stroke-width="6"/>
</g>
<path d="M285 446L294 438.500L293 443L300 442.500V449.500L293 449.500L294 453.500Z" fill="#6e6baa"/>
<path d="M296 634L300 622L307 624L306 634Z" fill="#0c3c6c"/>
<g font-family="'Liberation Serif','DejaVu Serif',serif" font-size="10.5" text-anchor="middle">
<g transform="translate(538.8 350.1)"><use href="#pin" fill="#00e5ee"/><circle r="6.4" fill="#fff" stroke="#111" stroke-width="1.100"/><text y="3.8" font-size="11.5" fill="#000">2</text></g>
<g transform="translate(347.8 371.3)"><use href="#pin" fill="#cc3300"/><circle r="6.4" fill="#fff" stroke="#111" stroke-width="1.100"/><text y="3.8" font-size="11.5" fill="#000">2</text></g>
<g transform="translate(561 381.8)"><use href="#pin" fill="#62a030"/><circle r="6.4" fill="#fff" stroke="#111" stroke-width="1.100"/><text y="3.8" font-size="11.5" fill="#000">2</text></g>
<g transform="translate(309.8 395.1)"><use href="#pin" fill="#62a030"/><circle r="6.4" fill="#fff" stroke="#111" stroke-width="1.100"/><text y="3.8" font-size="11.5" fill="#000">5</text></g>
<g transform="translate(460.5 398.3)"><use href="#pin" fill="#62a030"/><circle r="6.4" fill="#fff" stroke="#111" stroke-width="1.100"/><text y="3.8" font-size="11.5" fill="#000">3</text></g>
<g transform="translate(367.2 430.8)"><use href="#pin" fill="#f7c430"/><circle r="6.4" fill="#fff" stroke="#111" stroke-width="1.100"/><text y="3.8" font-size="11.5" fill="#000">2</text></g>
<g transform="translate(421 400.1)"><use href="#pin" fill="#8ccb33"/><circle r="6.4" fill="#fff" stroke="#111" stroke-width="1.100"/><text y="3.8" font-size="11.5" fill="#000">5</text></g>
<g transform="translate(507.5 405.1)"><use href="#pin" fill="#a0306e"/><circle r="6.4" fill="#fff" stroke="#111" stroke-width="1.100"/><text y="3.8" font-size="11.5" fill="#000">2</text></g>
<g transform="translate(185.8 410.1)"><use href="#pin" fill="#f7941d"/><circle r="6.4" fill="#fff" stroke="#111" stroke-width="1.100"/><text y="3.8" font-size="11.5" fill="#000">2</text></g>
<g transform="translate(363 410.8)"><use href="#pin" fill="#8ccb33"/><circle r="6.4" fill="#fff" stroke="#111" stroke-width="1.100"/><text y="3.8" font-size="11.5" fill="#000">7</text></g>
<g transform="translate(284.8 423.3)"><use href="#pinL" fill="#6e6baa"/><circle r="7.3" fill="#fff" stroke="#111" stroke-width="1.100"/><text y="4.1" font-size="12.5" fill="#000">2</text></g>
<g transform="translate(413 430.8)"><use href="#pin" fill="#8ccb33"/><circle r="6.4" fill="#fff" stroke="#111" stroke-width="1.100"/><text y="3.8" font-size="11.5" fill="#000">6</text></g>
<g transform="translate(581.8 447.1)"><use href="#pin" fill="#8ccb33"/><circle r="6.4" fill="#fff" stroke="#111" stroke-width="1.100"/><text y="3.8" font-size="11.5" fill="#000">2</text></g>
<g transform="translate(129.8 448.8)"><use href="#pin" fill="#62a030"/><circle r="6.4" fill="#fff" stroke="#111" stroke-width="1.100"/><text y="3.8" font-size="11.5" fill="#000">6</text></g>
<g transform="translate(389.8 450.1)"><use href="#pinX" fill="#6b3fa0"/><circle r="7.300" fill="#050505"/><text y="4.300" font-size="13" fill="#fff" stroke="#fff" stroke-width=".3">5</text></g>
<g transform="translate(528.8 450.8)"><use href="#pin" fill="#8ccb33"/><circle r="6.4" fill="#fff" stroke="#111" stroke-width="1.100"/><text y="3.8" font-size="11.5" fill="#000">3</text></g>
<g transform="translate(458.5 451.3)"><use href="#pin" fill="#8ccb33"/><circle r="6.4" fill="#fff" stroke="#111" stroke-width="1.100"/><text y="3.8" font-size="11.5" fill="#000">4</text></g>
<g transform="translate(294.8 458.3)"><use href="#pin" fill="#0e7070"/><circle r="6.4" fill="#fff" stroke="#111" stroke-width="1.100"/><text y="3.8" font-size="11.5" fill="#000">2</text></g>
<g transform="translate(329 466.8)"><use href="#pin" fill="#6b3fa0"/><circle r="6.4" fill="#fff" stroke="#111" stroke-width="1.100"/><text y="3.8" font-size="11.5" fill="#000">3</text></g>
<g transform="translate(205.2 478.6)"><use href="#pin" fill="#8ccb33"/><circle r="6.4" fill="#fff" stroke="#111" stroke-width="1.100"/><text y="3.8" font-size="11.5" fill="#000">8</text></g>
<g transform="translate(438.8 478.6)"><use href="#pin" fill="#62a030"/><circle r="6.4" fill="#fff" stroke="#111" stroke-width="1.100"/><text y="3.8" font-size="11.5" fill="#000">8</text></g>
<g transform="translate(385.5 481.8)"><use href="#pinX" fill="#6b3fa0"/><circle r="7.300" fill="#050505"/><text y="4.300" font-size="13" fill="#fff" stroke="#fff" stroke-width=".3">4</text></g>
<g transform="translate(236 486.1)"><use href="#pin" fill="#1f6fa5"/><circle r="6.4" fill="#fff" stroke="#111" stroke-width="1.100"/><text y="3.8" font-size="11.5" fill="#000">2</text></g>
<g transform="translate(470 496.1)"><use href="#pin" fill="#62a030"/><circle r="6.4" fill="#fff" stroke="#111" stroke-width="1.100"/><text y="3.8" font-size="11.5" fill="#000">2</text></g>
<g transform="translate(278 498.1)"><use href="#pin" fill="#6b3fa0"/><circle r="6.4" fill="#fff" stroke="#111" stroke-width="1.100"/><text y="3.8" font-size="11.5" fill="#000">2</text></g>
<g transform="translate(534.2 501.8)"><use href="#pin" fill="#8ccb33"/><circle r="6.4" fill="#fff" stroke="#111" stroke-width="1.100"/><text y="3.1" font-size="9.5" fill="#000" textLength="10" lengthAdjust="spacingAndGlyphs">12</text></g>
<g transform="translate(343.5 504.3)"><use href="#pin" fill="#8ccb33"/><circle r="6.4" fill="#fff" stroke="#111" stroke-width="1.100"/><text y="3.1" font-size="9.5" fill="#000" textLength="10" lengthAdjust="spacingAndGlyphs">10</text></g>
<g transform="translate(416.8 505.3)"><use href="#pin" fill="#cc3300"/><circle r="6.4" fill="#fff" stroke="#111" stroke-width="1.100"/><text y="3.8" font-size="11.5" fill="#000">2</text></g>
<g transform="translate(570 517.3)"><use href="#pin" fill="#f7941d"/><circle r="6.4" fill="#fff" stroke="#111" stroke-width="1.100"/><text y="3.8" font-size="11.5" fill="#000">2</text></g>
<g transform="translate(261.8 535.3)"><use href="#pin" fill="#8ccb33"/><circle r="6.4" fill="#fff" stroke="#111" stroke-width="1.100"/><text y="3.8" font-size="11.5" fill="#000">9</text></g>
<g transform="translate(491 538)"><use href="#pin" fill="#8ccb33"/><circle r="6.4" fill="#fff" stroke="#111" stroke-width="1.100"/><text y="3.1" font-size="9.5" fill="#000" textLength="10" lengthAdjust="spacingAndGlyphs">11</text></g>
<g transform="translate(430.5 538)"><use href="#pin" fill="#6e6baa"/><circle r="6.4" fill="#fff" stroke="#111" stroke-width="1.100"/><text y="3.8" font-size="11.5" fill="#000">2</text></g>
<g transform="translate(544.8 548)"><use href="#pin" fill="#8ccb33"/><circle r="6.4" fill="#fff" stroke="#111" stroke-width="1.100"/><text y="3.1" font-size="9.5" fill="#000" textLength="10" lengthAdjust="spacingAndGlyphs">13</text></g>
<g transform="translate(389.8 582.3)"><use href="#pin" fill="#62a030"/><circle r="6.4" fill="#fff" stroke="#111" stroke-width="1.100"/><text y="3.8" font-size="11.5" fill="#000">8</text></g>
<g transform="translate(518 586.8)"><use href="#pin" fill="#62a030"/><circle r="6.4" fill="#fff" stroke="#111" stroke-width="1.100"/><text y="3.1" font-size="9.5" fill="#000" textLength="10" lengthAdjust="spacingAndGlyphs">12</text></g>
<g transform="translate(213 594.8)"><use href="#pin" fill="#a0306e"/><circle r="6.4" fill="#fff" stroke="#111" stroke-width="1.100"/><text y="3.8" font-size="11.5" fill="#000">2</text></g>
<g transform="translate(299.8 599)"><use href="#pinL" fill="#0c3c6c"/><circle r="7.3" fill="#fff" stroke="#111" stroke-width="1.100"/><text y="4.1" font-size="12.5" fill="#000">2</text></g>
<g transform="translate(348 606)"><use href="#pin" fill="#8ccb33"/><circle r="6.4" fill="#fff" stroke="#111" stroke-width="1.100"/><text y="3.8" font-size="11.5" fill="#000">2</text></g>
<g transform="translate(324 632.3)"><use href="#pin" fill="#6e6baa"/><circle r="6.4" fill="#fff" stroke="#111" stroke-width="1.100"/><text y="3.8" font-size="11.5" fill="#000">2</text></g>
<g transform="translate(590 640.3)"><use href="#pin" fill="#cc3300"/><circle r="6.4" fill="#fff" stroke="#111" stroke-width="1.100"/><text y="3.8" font-size="11.5" fill="#000">2</text></g>
<g transform="translate(440.5 648.5)"><use href="#pinX" fill="#6b3fa0"/><circle r="7.300" fill="#050505"/><text y="4.300" font-size="13" fill="#fff" stroke="#fff" stroke-width=".3">2</text></g>
<g transform="translate(264.8 659.3)"><use href="#pin" fill="#62a030"/><circle r="6.4" fill="#fff" stroke="#111" stroke-width="1.100"/><text y="3.8" font-size="11.5" fill="#000">7</text></g>
<g transform="translate(330.5 662.8)"><use href="#pinX" fill="#6b3fa0"/><circle r="7.300" fill="#050505"/><text y="4.300" font-size="13" fill="#fff" stroke="#fff" stroke-width=".3">3</text></g>
<g transform="translate(388.5 666.3)"><use href="#pin" fill="#62a030"/><circle r="6.4" fill="#fff" stroke="#111" stroke-width="1.100"/><text y="3.8" font-size="11.5" fill="#000">9</text></g>
<g transform="translate(414.2 670.8)"><use href="#pin" fill="#62a030"/><circle r="6.4" fill="#fff" stroke="#111" stroke-width="1.100"/><text y="3.1" font-size="9.5" fill="#000" textLength="10" lengthAdjust="spacingAndGlyphs">10</text></g>
<g transform="translate(363 704)"><use href="#pin" fill="#6b3fa0"/><circle r="6.4" fill="#fff" stroke="#111" stroke-width="1.100"/><text y="3.8" font-size="11.5" fill="#000">2</text></g>
<g transform="translate(441.2 726.3)"><use href="#pin" fill="#62a030"/><circle r="6.4" fill="#fff" stroke="#111" stroke-width="1.100"/><text y="3.1" font-size="9.5" fill="#000" textLength="10" lengthAdjust="spacingAndGlyphs">11</text></g>
</g>
<g fill="none" stroke-linejoin="round">
<path d="M319.5 596L318.5 608L318.5 650" stroke="#6b3fa0" stroke-width="4"/>
<path d="M346 430.8L348.5 425.8L373.5 425.8L381 434.5L393.4 449.4L399.7 457.8L410 462" stroke="#62a030" stroke-width="2"/>
<path d="M304.5 463L290 466L270 467" stroke="#8ccb33" stroke-width="2"/>
<path d="M308.5 432L306 437L296 449.5L276 462" stroke="#62a030" stroke-width="2"/>
<path d="M400 449.4L413 449.5" stroke="#8ccb33" stroke-width="2"/>
<path d="M308.5 462L378 462" stroke="#6e6baa" stroke-width="5"/>
<path d="M402 462L406.5 462.5L417.5 471L442.5 476.5L466 487.5L480 501.5L493 515.5" stroke="#6e6baa" stroke-width="5"/>
<path d="M365 461L365 430.5L378 430.5L383 436" stroke="#8ccb33" stroke-width="2"/>
</g>
<g transform="translate(1317.5 126)"><circle r="24" fill="#fff" stroke="#bfbfbf" stroke-width=".8" filter="url(#ds)"/><g fill="none" stroke="#333" stroke-width="1.5"><path d="M-7-12L0-19L7-12M-7 12L0 19L7 12M-12-7L-19 0L-12 7M12-7L19 0L12 7"/><path d="M-14.500-8.500V-14.800H-8M14.500-8.500V-14.800H8M-14.500 8.500V14.800H-8M14.500 8.500V14.800H8"/></g><circle r="4" fill="none" stroke="#999" stroke-width=".8"/><circle r="1.5" fill="none" stroke="#999" stroke-width=".8"/></g>
<rect x="1315" y="170" width="4.600" height="136" fill="#fff" stroke="#bdbdbd" stroke-width=".8"/>
<g transform="translate(1317.5 166)" filter="url(#ds)"><rect x="-8" y="-7.500" width="16" height="15" rx="3" fill="#fff" stroke="#c4c4c4" stroke-width=".8"/><path d="M-5 0H5M0-5V5" stroke="#333" stroke-width="1.600" fill="none"/></g>
<g transform="translate(1317.5 232)" filter="url(#ds)"><rect x="-8" y="-7.500" width="16" height="15" rx="3" fill="#fff" stroke="#c4c4c4" stroke-width=".8"/><path d="M-5 0H5" stroke="#333" stroke-width="1.600" fill="none"/></g>
<g transform="translate(1317.5 310)" filter="url(#ds)"><rect x="-8" y="-7.500" width="16" height="15" rx="3" fill="#fff" stroke="#c4c4c4" stroke-width=".8"/><path d="M-5 0H5" stroke="#333" stroke-width="1.600" fill="none"/></g>
</svg>
    </div>
  </div>
  <div id="pwrap"><div id="panel">
    <div class="grip"><svg width="499" height="16"><defs><pattern id="gp" width="6" height="8" patternUnits="userSpaceOnUse"><path d="M.8 0V3M3.500 1.500V6M2 5V8M5 0V2.500M5 4.500V8" stroke="#f6f5f3" stroke-width="1.100"/></pattern></defs><rect width="499" height="16" fill="url(#gp)"/></svg></div>
    <h2>Map Filters</h2>
    <h3 style="left:61px;top:78px">Shipments</h3>
    <label style="right:341px;top:121px">Transport Mode</label>
    <label style="right:341px;top:168px">Service Provider</label>
    <label style="right:341px;top:216px">Equipment Group</label>
    <label style="right:341px;top:264px">Rate Offering</label>
    <label style="right:341px;top:312px">Total Ship Unit Count</label>
    <label style="right:341px;top:353px">Number of Stops</label>
    <label style="right:341px;top:394px">Total Weight</label>
    <label style="right:341px;top:435px">Total Volume</label>
    <div class="in" style="left:175px;top:113px;width:293px;height:36px"></div>
    <div class="in" style="left:175px;top:160px;width:273px;height:36px"></div>
    <div class="in" style="left:175px;top:208px;width:273px;height:36px"></div>
    <div class="in" style="left:175px;top:256px;width:273px;height:36px"></div>
    <div class="in" style="left:175px;top:304px;width:108px;height:30px"></div>
    <div class="in" style="left:175px;top:345px;width:108px;height:30px"></div>
    <div class="in" style="left:175px;top:386px;width:108px;height:30px"></div>
    <div class="in" style="left:175px;top:427px;width:108px;height:30px"></div>
    <label style="left:298px;top:312px">Between</label>
    <label style="left:298px;top:353px">Between</label>
    <label style="left:298px;top:394px">Between</label>
    <label style="left:298px;top:435px">Between</label>
    <div class="in" style="left:358px;top:304px;width:104px;height:30px"></div>
    <div class="in" style="left:358px;top:345px;width:104px;height:30px"></div>
    <div class="in" style="left:358px;top:386px;width:104px;height:30px"></div>
    <div class="in" style="left:358px;top:427px;width:104px;height:30px"></div>
    <h3 style="left:61px;top:487px">Scenario</h3>
    <div class="hr"></div>
    <div class="btn" style="left:24px;width:53px">Apply</div>
    <div class="btn" style="left:80px;width:52px">Clear</div>
    <div class="btn" style="left:135px;width:54px">Close</div>
    <svg id="picons" width="498" height="569" viewBox="718 96 498 569" style="position:absolute;left:0;top:0" fill="none" stroke="#161513" stroke-width="1.8" stroke-linecap="round" stroke-linejoin="round">
      <path d="M1190 122.5L1199 131.5M1199 122.5L1190 131.5" stroke-width="1.7" stroke-linecap="butt"/>
<path d="M755.5 180L760.2 184.7L765 180" stroke-width="1.7" stroke-linecap="butt" stroke-linejoin="miter"/>
<path d="M758 587L762.5 591.5L758 596" stroke-width="1.7" stroke-linecap="butt" stroke-linejoin="miter"/>
<g stroke-width="1.6"><circle cx="1179.5" cy="270" r="4.6"/><path d="M1183 273.5L1187 277.5"/><circle cx="1179.5" cy="318" r="4.6"/><path d="M1183 321.5L1187 325.5"/><circle cx="1179.5" cy="366" r="4.6"/><path d="M1183 369.5L1187 373.5"/></g>
    </svg>
  </div></div>
</div>
</body>
</html>
